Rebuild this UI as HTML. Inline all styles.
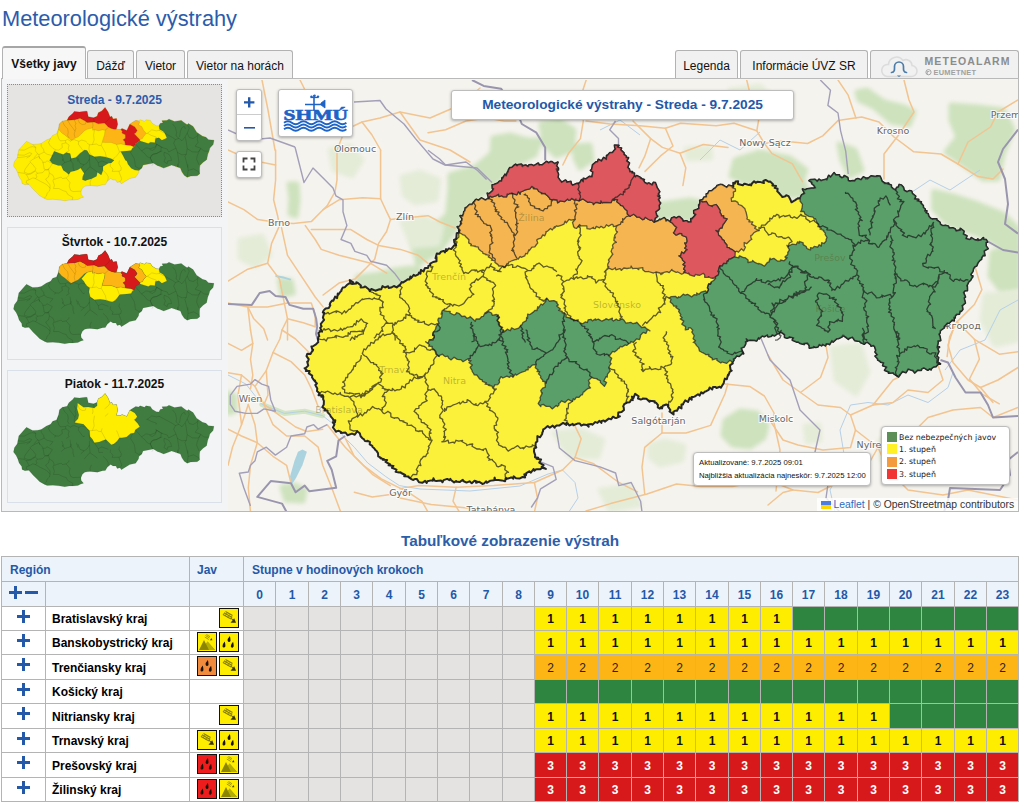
<!DOCTYPE html><html lang="sk"><head><meta charset="utf-8"><title>Meteorologické výstrahy</title><style>
html,body{margin:0;padding:0;background:#fff;}
body{width:1024px;height:807px;position:relative;overflow:hidden;font-family:"Liberation Sans",sans-serif;font-size:12px;color:#000;}
.abs{position:absolute;}
h1{position:absolute;left:2px;top:7px;margin:0;font-size:21.8px;font-weight:normal;color:#2b5cab;line-height:24px;white-space:nowrap;}
.tab{position:absolute;box-sizing:border-box;border:1px solid #b2b2b2;border-bottom:none;border-radius:3px 3px 0 0;background:#f1f1f1;font-size:12px;line-height:30px;text-align:center;white-space:nowrap;color:#111;top:50px;height:28px;}
.tab.act{top:46px;height:33px;background:#f7f7f7;font-weight:bold;line-height:32px;z-index:3;border-top:2px solid #a6a6a6;}
#panel{position:absolute;left:1px;top:78px;width:1018px;height:434px;box-sizing:border-box;border:1px solid #b9b9b9;background:#f3f4f5;}
.thumb{position:absolute;left:7px;width:215px;height:133px;box-sizing:border-box;border:1px solid #d9e0ea;background:#f2f4f6;}
.thumb.sel{border:1px dotted #6f8dc0;background:#e5e4e3;}
.thumb .t{position:absolute;left:0;right:0;top:8px;text-align:center;font-weight:bold;font-size:12px;line-height:14px;color:#111;}
.thumb.sel .t{color:#2b5cab;}
.thumb svg{position:absolute;left:0;top:0;}
#map{position:absolute;left:228px;top:80px;width:790px;height:431px;overflow:hidden;background:#f5f3ee;}
.ctl{position:absolute;background:#fff;box-sizing:border-box;border:1px solid #bdbdbd;border-radius:3px;box-shadow:0 1px 3px rgba(0,0,0,0.3);}
#ttl{left:223px;top:10px;width:343px;height:30px;text-align:center;font-weight:bold;font-size:13.7px;line-height:28px;color:#2458a8;}
.c{position:absolute;font-size:12px;font-weight:bold;text-align:center;white-space:nowrap;overflow:hidden;}
.cell{position:absolute;box-sizing:border-box;border-right:1px solid #b4b4b4;border-bottom:1px solid #b4b4b4;font-size:12px;font-weight:bold;text-align:center;line-height:24px;}
</style></head><body>
<h1>Meteorologické výstrahy</h1>
<div class="tab act" style="left:2px;width:84px">Všetky javy</div>
<div class="tab" style="left:87px;width:47px">Dážď</div>
<div class="tab" style="left:136px;width:49px">Vietor</div>
<div class="tab" style="left:187px;width:106px">Vietor na horách</div>
<div class="tab" style="left:675px;width:63px">Legenda</div>
<div class="tab" style="left:740px;width:128px">Informácie ÚVZ SR</div>
<div class="tab" style="left:870px;width:149px;" id="ma"><svg class="abs" style="left:0;top:0" width="147" height="27" viewBox="870 50 147 27"><path d="M886,75.5h24a5.5,5.5 0 0 0 1,-11a6,6 0 0 0 -9,-5a8,8 0 0 0 -14.500,4a6,6 0 0 0 -1.500,12z" fill="none" stroke="#dcdcdc" stroke-width="1.6"/><path d="M890.500,71.500c3.500,0 3,-3.500 3,-6a4.500,4.500 0 0 1 9,0c0,2.500 -0.500,6 3,6" fill="none" stroke="#4d7ca8" stroke-width="1.7" stroke-linecap="round"/><path d="M895.800,74.500h4.400l-2.200,1.500z" fill="#4d7ca8"/><circle cx="927.500" cy="71.200" r="2.600" fill="none" stroke="#999" stroke-width="0.9"/><path d="M926.300,72.800v-2.300h2" fill="none" stroke="#999" stroke-width="0.8"/><text x="923.500" y="64.200" font-family="Liberation Sans, sans-serif" font-weight="bold" font-size="10.500" fill="#8c8c8c" textLength="85" lengthAdjust="spacing">METEOALARM</text><text x="932.500" y="74" font-family="Liberation Sans, sans-serif" font-weight="bold" font-size="7.400" fill="#a0a0a0" textLength="42.500" lengthAdjust="spacing">EUMETNET</text></svg></div>
<div id="panel"></div>
<div class="thumb sel" style="top:84px"><svg width="213" height="131" viewBox="0 0 213 131"><g transform="matrix(0.29440,0.01619,0,0.2825,-84.586,-28.500)" stroke="#000" stroke-opacity="0.18" stroke-width="1.6" stroke-linejoin="round"><path d="M319,340 324,312 338,295 350,280 371,290 388,288 400,285 418,272 432,265 439,254 452,248 459,230 462,212 472,202 488,198 494,185 508,172 512,165 530,166 550,162 556,162 560,181 578,184 590,178 594,165 606,158 617,145 627,160 634,178 640,175 644,184 656,182 660,202 655,220 671,220 674,216 691,222 701,200 706,196 721,185 731,186 736,182 751,186 756,181 771,182 777,192 791,200 800,200 804,191 814,188 810,181 827,179 834,174 853,181 876,176 888,185 896,190 900,186 916,195 928,215 948,228 960,231 968,239 987,240 984,255 973,268 970,280 966,290 962,310 950,320 939,332 938,342 938,362 930,369 908,371 896,376 886,370 878,358 873,345 863,342 843,336 830,342 816,348 800,342 796,341 781,332 768,336 746,341 742,352 732,362 731,370 721,386 701,392 686,402 672,412 668,405 658,408 654,400 644,400 636,395 625,405 618,418 608,419 591,425 566,424 556,426 548,428 540,435 535,448 536,458 544,467 535,470 525,476 508,479 495,480 480,483 460,481 440,480 420,482 410,478 395,470 385,460 372,448 358,432 345,434 335,430 334,420 325,408 321,395 315,382 306,370 309,355Z" fill="#ffed00"/><path d="M488,198 515,194 532,188 548,196 556,202 580,199 594,204 615,200 628,214 638,218 648,220 655,220 671,220 676,228 674,232 686,238 686,250 678,256 684,262 686,274 671,271 656,274 638,268 621,269 607,269 610,258 615,242 617,226 608,225 594,229 581,226 575,228 574,220 556,226 546,232 538,242 525,255 515,260 502,268 492,260 480,250 470,244 459,231 462,212 472,202Z" fill="#fdb515"/><path d="M701,200 706,196 721,185 731,186 735,190 731,200 742,206 748,218 757,229 748,240 744,248 735,252 728,245 716,232 722,228 726,220 718,208 706,202Z" fill="#fdb515"/><path d="M488,198 494,185 508,172 512,165 530,166 550,162 556,162 560,181 578,184 590,178 594,165 606,158 617,145 627,160 634,178 640,175 644,184 656,182 660,202 655,220 648,220 638,218 628,214 615,200 594,204 580,199 556,202 548,196 532,188 515,194Z" fill="#d7191c"/><path d="M671,220 674,216 691,222 701,200 706,202 718,208 726,220 722,228 716,232 728,245 735,252 735,256 720,268 716,279 704,275 686,274 684,262 678,256 686,250 686,238 674,232 676,228Z" fill="#d7191c"/><path d="M800,200 804,191 814,188 810,181 827,179 834,174 853,181 876,176 888,185 896,190 900,186 916,195 928,215 948,228 960,231 968,239 987,240 984,255 973,268 970,280 966,290 962,310 950,320 939,332 938,342 938,362 930,369 908,371 896,376 886,370 878,358 873,345 863,342 843,336 830,342 816,348 800,342 796,341 781,332 768,336 746,341 742,352 732,362 718,361 706,355 695,342 691,330 686,328 678,312 670,298 691,295 706,292 711,282 716,279 720,268 735,256 742,258 756,262 764,264 771,259 781,260 786,260 788,245 800,242 810,250 827,241 820,225 814,218 802,212Z" fill="#407c3f"/><path d="M430,342 444,310 460,315 475,320 485,312 498,315 502,332 518,328 532,312 548,300 556,301 564,315 581,322 600,319 618,320 638,325 648,330 638,340 628,342 610,354 610,368 604,385 591,376 588,390 571,400 556,405 550,408 540,405 541,395 546,382 541,375 534,364 525,371 512,376 500,379 494,389 485,382 475,375 468,359 458,360 438,354 428,342Z" fill="#407c3f"/><path d="M472,202 480,218 490,228 492,240 490,252 495,260 M490,198 498,212 508,225 515,235 512,245 515,258 M512,194 518,208 515,215 518,225 515,235 M525,192 530,205 540,210 550,208 552,200 M459,231 455,250 460,265 465,272 482,270 490,265 500,272 502,268 M432,265 425,280 430,290 440,300 450,305 444,310 M482,270 484,278 470,282 472,295 460,305 450,305 M484,278 495,285 492,298 495,305 485,312 M502,268 512,265 528,270 526,280 535,292 542,302 548,300 M528,270 538,265 550,268 556,272 M400,285 400,295 408,305 410,315 420,322 440,326 430,340 M371,290 382,300 380,312 388,322 392,325 410,315 M324,312 342,312 362,300 371,298 382,300 M319,330 342,330 360,320 368,322 362,332 350,340 M392,325 395,340 M388,322 375,338 M470,322 475,335 472,342 M498,315 500,330 502,342 M520,325 525,342 M615,200 628,188 634,178 M580,199 578,184 M575,200 576,212 574,220 M617,226 628,215 M581,226 578,245 580,262 574,279 M607,269 604,280 596,281 588,276 574,279 564,280 556,275 M564,280 562,295 566,312 578,322 M604,280 610,290 618,305 621,320 M656,274 661,285 666,300 658,312 651,320 644,325 M666,300 670,298 M720,268 731,280 741,292 756,280 771,282 788,275 791,265 806,272 812,275 M741,292 751,300 761,312 771,315 774,305 791,298 804,290 812,288 M711,282 706,292 704,300 716,320 718,330 M771,315 776,325 781,335 776,342 M757,229 761,228 776,215 791,218 802,215 M761,228 774,235 791,240 790,245 M846,190 856,202 860,220 858,232 868,240 856,245 850,258 858,275 863,290 866,310 868,325 863,342 M868,240 878,248 888,235 896,220 903,202 896,190 M878,202 873,215 870,235 M878,202 886,196 890,205 M896,220 903,235 916,238 928,230 933,222 M890,235 893,252 896,275 893,295 888,302 893,320 898,342 M896,275 913,285 933,285 940,275 943,270 M933,222 930,240 933,250 923,265 940,270 953,280 968,280 M940,275 930,298 928,310 936,330 M863,290 878,298 893,295 M800,215 830,230 846,238 856,245 M788,262 800,270 808,275 828,280 833,290 850,280 858,275 M808,275 806,290 793,298 780,300 770,315 778,332 M818,292 833,298 840,308 843,320 830,322 828,332 817,325 822,312 817,302 818,292 M768,285 778,288 788,280 793,265 M319,340 342,336 362,330 M362,352 368,345 385,335 392,332 M392,332 405,348 408,360 410,375 422,378 425,372 M405,352 415,350 420,345 438,354 M362,352 372,362 382,375 380,382 365,392 358,395 342,390 346,378 362,355 M321,392 342,394 350,398 359,416 351,419 349,428 358,432 M350,398 365,395 380,384 388,391 382,396 386,405 380,410 372,408 359,416 M380,410 395,418 410,425 422,432 430,442 428,452 420,460 418,470 410,478 M388,391 405,388 412,379 425,375 428,388 425,402 415,410 422,420 430,430 430,442 M438,354 430,368 425,375 M428,388 440,395 444,405 440,415 445,430 442,442 460,441 475,448 485,450 490,460 508,470 505,479 M444,410 455,405 468,400 472,405 485,402 495,392 494,389 M485,402 498,418 495,430 500,445 508,449 535,446 M472,335 480,348 468,359 M480,348 500,340 502,330 M500,340 508,350 508,362 512,376 M525,330 532,348 546,352 534,364 M546,352 556,345 564,330 M564,315 564,330 566,358 556,368 546,382 M566,358 581,368 591,376 M594,342 596,355 610,354 M581,322 594,342 606,335 628,342 M610,368 621,378 628,390 626,405 M636,342 634,352 644,362 641,370 664,368 671,365 672,355 664,340 666,330 M664,368 668,380 674,395 668,405 M571,400 566,412 567,424 M718,330 720,348 731,354 742,352 M863,330 866,342 M898,330 899,352 918,345 936,355 938,362 M899,352 896,376" fill="none" stroke-opacity="0.25"/></g></svg><div class="t" style="top:8px">Streda - 9.7.2025</div></div>
<div class="thumb" style="top:227px"><svg width="213" height="131" viewBox="0 0 213 131"><g transform="matrix(0.29440,0.01619,0,0.2825,-84.586,-28.500)" stroke="#000" stroke-opacity="0.18" stroke-width="1.6" stroke-linejoin="round"><path d="M319,340 324,312 338,295 350,280 371,290 388,288 400,285 418,272 432,265 439,254 452,248 459,230 462,212 472,202 488,198 494,185 508,172 512,165 530,166 550,162 556,162 560,181 578,184 590,178 594,165 606,158 617,145 627,160 634,178 640,175 644,184 656,182 660,202 655,220 671,220 674,216 691,222 701,200 706,196 721,185 731,186 736,182 751,186 756,181 771,182 777,192 791,200 800,200 804,191 814,188 810,181 827,179 834,174 853,181 876,176 888,185 896,190 900,186 916,195 928,215 948,228 960,231 968,239 987,240 984,255 973,268 970,280 966,290 962,310 950,320 939,332 938,342 938,362 930,369 908,371 896,376 886,370 878,358 873,345 863,342 843,336 830,342 816,348 800,342 796,341 781,332 768,336 746,341 742,352 732,362 731,370 721,386 701,392 686,402 672,412 668,405 658,408 654,400 644,400 636,395 625,405 618,418 608,419 591,425 566,424 556,426 548,428 540,435 535,448 536,458 544,467 535,470 525,476 508,479 495,480 480,483 460,481 440,480 420,482 410,478 395,470 385,460 372,448 358,432 345,434 335,430 334,420 325,408 321,395 315,382 306,370 309,355Z" fill="#407c3f"/><path d="M731,186 736,182 751,186 756,181 771,182 777,192 791,200 800,200 802,212 814,218 820,225 827,241 810,250 800,242 788,245 786,260 781,260 771,259 764,264 756,262 742,258 735,256 735,252 744,248 748,240 757,229 748,218 742,206 731,200 735,190Z" fill="#ffed00"/><path d="M537,250 556,226 574,220 575,228 581,226 594,229 608,225 617,226 615,242 610,258 607,269 621,269 638,268 656,274 671,271 686,274 704,275 716,279 711,282 706,292 691,295 670,298 666,300 658,312 651,320 644,325 638,325 618,320 600,319 581,322 566,312 562,295 564,280 556,275 550,268 545,258Z" fill="#ffed00"/><path d="M488,198 515,194 532,188 548,196 556,202 580,199 594,204 615,200 628,214 638,218 648,220 655,220 671,220 676,228 674,232 686,238 686,250 678,256 684,262 686,274 671,271 656,274 638,268 621,269 607,269 610,258 615,242 617,226 608,225 594,229 581,226 575,228 574,220 556,226 546,232 538,242 525,255 515,260 502,268 492,260 480,250 470,244 459,231 462,212 472,202Z" fill="#fdb515"/><path d="M701,200 706,196 721,185 731,186 735,190 731,200 742,206 748,218 757,229 748,240 744,248 735,252 728,245 716,232 722,228 726,220 718,208 706,202Z" fill="#fdb515"/><path d="M488,198 494,185 508,172 512,165 530,166 550,162 556,162 560,181 578,184 590,178 594,165 606,158 617,145 627,160 634,178 640,175 644,184 656,182 660,202 655,220 648,220 638,218 628,214 615,200 594,204 580,199 556,202 548,196 532,188 515,194Z" fill="#d7191c"/><path d="M671,220 674,216 691,222 701,200 706,202 718,208 726,220 722,228 716,232 728,245 735,252 735,256 720,268 716,279 704,275 686,274 684,262 678,256 686,250 686,238 674,232 676,228Z" fill="#d7191c"/><path d="M472,202 480,218 490,228 492,240 490,252 495,260 M490,198 498,212 508,225 515,235 512,245 515,258 M512,194 518,208 515,215 518,225 515,235 M525,192 530,205 540,210 550,208 552,200 M459,231 455,250 460,265 465,272 482,270 490,265 500,272 502,268 M432,265 425,280 430,290 440,300 450,305 444,310 M482,270 484,278 470,282 472,295 460,305 450,305 M484,278 495,285 492,298 495,305 485,312 M502,268 512,265 528,270 526,280 535,292 542,302 548,300 M528,270 538,265 550,268 556,272 M400,285 400,295 408,305 410,315 420,322 440,326 430,340 M371,290 382,300 380,312 388,322 392,325 410,315 M324,312 342,312 362,300 371,298 382,300 M319,330 342,330 360,320 368,322 362,332 350,340 M392,325 395,340 M388,322 375,338 M470,322 475,335 472,342 M498,315 500,330 502,342 M520,325 525,342 M615,200 628,188 634,178 M580,199 578,184 M575,200 576,212 574,220 M617,226 628,215 M581,226 578,245 580,262 574,279 M607,269 604,280 596,281 588,276 574,279 564,280 556,275 M564,280 562,295 566,312 578,322 M604,280 610,290 618,305 621,320 M656,274 661,285 666,300 658,312 651,320 644,325 M666,300 670,298 M720,268 731,280 741,292 756,280 771,282 788,275 791,265 806,272 812,275 M741,292 751,300 761,312 771,315 774,305 791,298 804,290 812,288 M711,282 706,292 704,300 716,320 718,330 M771,315 776,325 781,335 776,342 M757,229 761,228 776,215 791,218 802,215 M761,228 774,235 791,240 790,245 M846,190 856,202 860,220 858,232 868,240 856,245 850,258 858,275 863,290 866,310 868,325 863,342 M868,240 878,248 888,235 896,220 903,202 896,190 M878,202 873,215 870,235 M878,202 886,196 890,205 M896,220 903,235 916,238 928,230 933,222 M890,235 893,252 896,275 893,295 888,302 893,320 898,342 M896,275 913,285 933,285 940,275 943,270 M933,222 930,240 933,250 923,265 940,270 953,280 968,280 M940,275 930,298 928,310 936,330 M863,290 878,298 893,295 M800,215 830,230 846,238 856,245 M788,262 800,270 808,275 828,280 833,290 850,280 858,275 M808,275 806,290 793,298 780,300 770,315 778,332 M818,292 833,298 840,308 843,320 830,322 828,332 817,325 822,312 817,302 818,292 M768,285 778,288 788,280 793,265 M319,340 342,336 362,330 M362,352 368,345 385,335 392,332 M392,332 405,348 408,360 410,375 422,378 425,372 M405,352 415,350 420,345 438,354 M362,352 372,362 382,375 380,382 365,392 358,395 342,390 346,378 362,355 M321,392 342,394 350,398 359,416 351,419 349,428 358,432 M350,398 365,395 380,384 388,391 382,396 386,405 380,410 372,408 359,416 M380,410 395,418 410,425 422,432 430,442 428,452 420,460 418,470 410,478 M388,391 405,388 412,379 425,375 428,388 425,402 415,410 422,420 430,430 430,442 M438,354 430,368 425,375 M428,388 440,395 444,405 440,415 445,430 442,442 460,441 475,448 485,450 490,460 508,470 505,479 M444,410 455,405 468,400 472,405 485,402 495,392 494,389 M485,402 498,418 495,430 500,445 508,449 535,446 M472,335 480,348 468,359 M480,348 500,340 502,330 M500,340 508,350 508,362 512,376 M525,330 532,348 546,352 534,364 M546,352 556,345 564,330 M564,315 564,330 566,358 556,368 546,382 M566,358 581,368 591,376 M594,342 596,355 610,354 M581,322 594,342 606,335 628,342 M610,368 621,378 628,390 626,405 M636,342 634,352 644,362 641,370 664,368 671,365 672,355 664,340 666,330 M664,368 668,380 674,395 668,405 M571,400 566,412 567,424 M718,330 720,348 731,354 742,352 M863,330 866,342 M898,330 899,352 918,345 936,355 938,362 M899,352 896,376" fill="none" stroke-opacity="0.25"/></g></svg><div class="t" style="top:6.5px">Štvrtok - 10.7.2025</div></div>
<div class="thumb" style="top:370px"><svg width="213" height="131" viewBox="0 0 213 131"><g transform="matrix(0.29440,0.01619,0,0.2825,-84.586,-28.500)" stroke="#000" stroke-opacity="0.18" stroke-width="1.6" stroke-linejoin="round"><path d="M319,340 324,312 338,295 350,280 371,290 388,288 400,285 418,272 432,265 439,254 452,248 459,230 462,212 472,202 488,198 494,185 508,172 512,165 530,166 550,162 556,162 560,181 578,184 590,178 594,165 606,158 617,145 627,160 634,178 640,175 644,184 656,182 660,202 655,220 671,220 674,216 691,222 701,200 706,196 721,185 731,186 736,182 751,186 756,181 771,182 777,192 791,200 800,200 804,191 814,188 810,181 827,179 834,174 853,181 876,176 888,185 896,190 900,186 916,195 928,215 948,228 960,231 968,239 987,240 984,255 973,268 970,280 966,290 962,310 950,320 939,332 938,342 938,362 930,369 908,371 896,376 886,370 878,358 873,345 863,342 843,336 830,342 816,348 800,342 796,341 781,332 768,336 746,341 742,352 732,362 731,370 721,386 701,392 686,402 672,412 668,405 658,408 654,400 644,400 636,395 625,405 618,418 608,419 591,425 566,424 556,426 548,428 540,435 535,448 536,458 544,467 535,470 525,476 508,479 495,480 480,483 460,481 440,480 420,482 410,478 395,470 385,460 372,448 358,432 345,434 335,430 334,420 325,408 321,395 315,382 306,370 309,355Z" fill="#407c3f"/><path d="M524,184 544,198 560,196 580,199 590,190 590,178 594,165 606,158 617,145 627,160 634,178 640,175 644,184 656,182 660,202 655,220 671,220 674,216 691,222 701,200 706,202 718,208 726,220 722,228 716,232 728,245 735,256 720,268 716,279 704,282 690,295 677,298 666,300 658,312 647,322 638,325 620,308 610,312 597,318 581,322 574,310 566,300 564,280 556,272 544,258 513,254 525,240 528,226 522,205Z" fill="#ffed00"/><path d="M472,202 480,218 490,228 492,240 490,252 495,260 M490,198 498,212 508,225 515,235 512,245 515,258 M512,194 518,208 515,215 518,225 515,235 M525,192 530,205 540,210 550,208 552,200 M459,231 455,250 460,265 465,272 482,270 490,265 500,272 502,268 M432,265 425,280 430,290 440,300 450,305 444,310 M482,270 484,278 470,282 472,295 460,305 450,305 M484,278 495,285 492,298 495,305 485,312 M502,268 512,265 528,270 526,280 535,292 542,302 548,300 M528,270 538,265 550,268 556,272 M400,285 400,295 408,305 410,315 420,322 440,326 430,340 M371,290 382,300 380,312 388,322 392,325 410,315 M324,312 342,312 362,300 371,298 382,300 M319,330 342,330 360,320 368,322 362,332 350,340 M392,325 395,340 M388,322 375,338 M470,322 475,335 472,342 M498,315 500,330 502,342 M520,325 525,342 M615,200 628,188 634,178 M580,199 578,184 M575,200 576,212 574,220 M617,226 628,215 M581,226 578,245 580,262 574,279 M607,269 604,280 596,281 588,276 574,279 564,280 556,275 M564,280 562,295 566,312 578,322 M604,280 610,290 618,305 621,320 M656,274 661,285 666,300 658,312 651,320 644,325 M666,300 670,298 M720,268 731,280 741,292 756,280 771,282 788,275 791,265 806,272 812,275 M741,292 751,300 761,312 771,315 774,305 791,298 804,290 812,288 M711,282 706,292 704,300 716,320 718,330 M771,315 776,325 781,335 776,342 M757,229 761,228 776,215 791,218 802,215 M761,228 774,235 791,240 790,245 M846,190 856,202 860,220 858,232 868,240 856,245 850,258 858,275 863,290 866,310 868,325 863,342 M868,240 878,248 888,235 896,220 903,202 896,190 M878,202 873,215 870,235 M878,202 886,196 890,205 M896,220 903,235 916,238 928,230 933,222 M890,235 893,252 896,275 893,295 888,302 893,320 898,342 M896,275 913,285 933,285 940,275 943,270 M933,222 930,240 933,250 923,265 940,270 953,280 968,280 M940,275 930,298 928,310 936,330 M863,290 878,298 893,295 M800,215 830,230 846,238 856,245 M788,262 800,270 808,275 828,280 833,290 850,280 858,275 M808,275 806,290 793,298 780,300 770,315 778,332 M818,292 833,298 840,308 843,320 830,322 828,332 817,325 822,312 817,302 818,292 M768,285 778,288 788,280 793,265 M319,340 342,336 362,330 M362,352 368,345 385,335 392,332 M392,332 405,348 408,360 410,375 422,378 425,372 M405,352 415,350 420,345 438,354 M362,352 372,362 382,375 380,382 365,392 358,395 342,390 346,378 362,355 M321,392 342,394 350,398 359,416 351,419 349,428 358,432 M350,398 365,395 380,384 388,391 382,396 386,405 380,410 372,408 359,416 M380,410 395,418 410,425 422,432 430,442 428,452 420,460 418,470 410,478 M388,391 405,388 412,379 425,375 428,388 425,402 415,410 422,420 430,430 430,442 M438,354 430,368 425,375 M428,388 440,395 444,405 440,415 445,430 442,442 460,441 475,448 485,450 490,460 508,470 505,479 M444,410 455,405 468,400 472,405 485,402 495,392 494,389 M485,402 498,418 495,430 500,445 508,449 535,446 M472,335 480,348 468,359 M480,348 500,340 502,330 M500,340 508,350 508,362 512,376 M525,330 532,348 546,352 534,364 M546,352 556,345 564,330 M564,315 564,330 566,358 556,368 546,382 M566,358 581,368 591,376 M594,342 596,355 610,354 M581,322 594,342 606,335 628,342 M610,368 621,378 628,390 626,405 M636,342 634,352 644,362 641,370 664,368 671,365 672,355 664,340 666,330 M664,368 668,380 674,395 668,405 M571,400 566,412 567,424 M718,330 720,348 731,354 742,352 M863,330 866,342 M898,330 899,352 918,345 936,355 938,362 M899,352 896,376" fill="none" stroke-opacity="0.25"/></g></svg><div class="t" style="top:5.5px">Piatok - 11.7.2025</div></div>
<div id="map">
<svg class="abs" style="left:0;top:0" width="790" height="431" viewBox="228 80 790 431">
<defs><filter id="bl" x="-20%" y="-20%" width="140%" height="140%"><feGaussianBlur stdDeviation="2.2"/></filter></defs>
<g filter="url(#bl)" fill="#cde2bd" stroke="#cde2bd" stroke-width="5" stroke-linejoin="round"><path d="M450.0,175.0 L475.0,167.5 L490.0,155.0 L500.0,145.0 L525.0,140.0 L540.0,140.0 L535.0,155.0 L512.5,165.0 L500.0,177.5 L490.0,190.0 L475.0,200.0 L462.5,210.0 L455.0,230.0 L440.0,250.0 L417.5,265.0 L415.0,245.0 L430.0,230.0 L447.5,215.0 L450.0,190.0Z"/><path d="M357.5,280.0 L375.0,275.0 L395.0,270.0 L410.0,268.0 L420.0,270.0 L400.0,287.0 L387.5,289.0 L371.0,292.0Z"/><path d="M493.0,138.0 L510.0,135.0 L527.0,140.0 L526.0,160.0 L505.0,165.0 L492.0,155.0Z"/><path d="M289.0,184.0 L297.0,184.0 L298.0,200.0 L296.0,216.0 L290.0,214.0 L291.0,198.0Z"/><path d="M279.5,280.0 L291.0,281.0 L293.4,293.0 L282.0,295.0Z"/><path d="M414.0,230.0 L428.0,228.0 L440.0,236.0 L436.0,250.0 L424.0,260.0 L414.0,252.0Z"/><path d="M357.0,277.0 L372.0,275.0 L386.0,279.0 L384.0,287.0 L366.0,288.0Z"/><path d="M857.0,92.0 L867.0,90.0 L884.0,102.0 L904.0,107.0 L914.0,112.0 L909.0,125.0 L891.5,122.0 L874.0,107.0 L859.0,100.0Z"/><path d="M951.0,105.0 L978.0,107.0 L1003.0,110.0 L1013.0,129.5 L1003.0,154.0 L998.0,179.0 L983.0,179.0 L963.0,164.0 L946.0,152.0 L958.0,137.0 L951.0,120.0Z"/><path d="M933.6,191.5 L953.0,196.0 L978.0,204.0 L1003.0,214.0 L1018.0,228.6 L1018.0,253.0 L1003.0,248.0 L988.0,238.5 L968.0,231.0 L948.0,223.7 L933.6,209.0Z"/><path d="M780.0,164.0 L795.0,171.6 L805.0,184.0 L807.0,194.0 L795.0,196.0 L780.0,194.0 L768.0,180.0Z"/><path d="M839.0,144.0 L855.0,150.0 L862.0,170.0 L850.0,176.0 L842.0,160.0Z"/><path d="M541.0,124.0 L560.0,121.0 L574.0,130.0 L572.0,150.0 L556.0,156.0 L545.0,145.0Z"/><path d="M576.0,146.0 L590.0,145.0 L592.0,160.0 L580.0,168.0 L575.0,158.0Z"/><path d="M735.0,160.0 L760.0,152.0 L790.0,158.0 L806.0,170.0 L800.0,185.0 L770.0,180.0 L745.0,182.0 L731.0,176.0Z"/><path d="M655.0,205.0 L690.0,200.0 L700.0,202.0 L692.0,220.0 L672.0,216.0 L656.0,219.0Z"/><path d="M725.0,420.6 L740.0,411.0 L757.0,413.0 L767.0,425.5 L764.0,437.6 L750.0,447.0 L732.6,445.0 L723.0,435.0Z"/><path d="M228.0,393.0 L235.0,396.0 L235.0,411.0 L228.0,413.0Z"/><path d="M282.0,487.0 L295.0,485.0 L305.0,490.0 L303.0,501.0 L286.0,500.0Z"/><path d="M992.0,252.0 L1018.0,248.0 L1018.0,288.0 L1002.0,292.0 L990.0,276.0Z"/></g>
<g filter="url(#bl)" fill="#e4ecd8" stroke="#e4ecd8" stroke-width="5" stroke-linejoin="round"><path d="M650.0,445.0 L665.0,441.0 L684.0,446.0 L682.0,460.0 L660.0,465.0 L650.0,457.0Z"/><path d="M686.0,149.0 L710.0,148.0 L711.0,158.0 L688.0,159.0Z"/><path d="M985.0,295.0 L1018.0,292.0 L1018.0,340.0 L995.0,345.0 L982.0,320.0Z"/><path d="M832.0,348.0 L860.0,345.0 L868.0,372.0 L856.0,394.0 L836.0,380.0Z"/><path d="M805.0,426.0 L819.0,425.0 L820.0,440.0 L807.0,442.0Z"/><path d="M402.0,177.0 L420.0,172.0 L439.0,180.0 L436.0,200.0 L415.0,203.0 L404.0,195.0Z"/><path d="M402.0,222.0 L425.0,218.0 L442.0,226.0 L438.0,244.0 L412.0,246.0Z"/><path d="M554.0,433.0 L580.0,430.0 L603.0,440.0 L598.0,457.0 L570.0,456.0Z"/><path d="M330.0,150.0 L350.0,146.0 L362.0,160.0 L352.0,176.0 L334.0,170.0Z"/><path d="M240.0,240.0 L262.0,236.0 L270.0,255.0 L255.0,266.0 L240.0,258.0Z"/><path d="M730.0,90.0 L760.0,86.0 L775.0,100.0 L760.0,112.0 L735.0,108.0Z"/><path d="M880.0,440.0 L910.0,436.0 L920.0,455.0 L900.0,470.0 L882.0,460.0Z"/><path d="M600.0,490.0 L630.0,486.0 L640.0,505.0 L610.0,510.0Z"/></g>
<path d="M261.8,404.4L284.4,413.4L304.7,411.2L322.7,415.7" fill="none" stroke="#d3e6c4" stroke-width="5" stroke-linecap="round" stroke-linejoin="round"/>
<path d="M302.4,449.5L306.9,451.8L302.4,465.3L295.6,478.8L291,485.6L290,476.6L294.5,460.8L298,451.8Z" fill="#aad3df"/><path d="M275.6,275l8,1.500l7.800,2.500l-1,1.500l-7,-2l-8,-1.500z" fill="#aad3df"/>
<g fill="none" stroke="#b5d0e8" stroke-width="1" stroke-linejoin="round"><path d="M228.0,375.0 L246.0,384.1 L261.8,404.4 L284.4,413.4 L304.7,411.2 L322.7,415.7 L334.0,424.7 L345.2,438.2 L354.3,447.2 L367.8,463.0 L385.8,476.6 L399.4,485.6 L420.0,489.0 L470.0,491.0 L520.0,486.0 L548.0,474.0 L562.5,470.0 L575.0,482.5 L578.0,498.0 L568.8,512.0"/><path d="M700.0,160.0 L720.0,140.0 L740.0,150.0 L760.0,132.0"/><path d="M600.0,130.0 L620.0,120.0 L640.0,135.0"/><path d="M900.0,200.0 L930.0,180.0 L950.0,190.0 L980.0,170.0"/><path d="M1018.0,300.0 L1000.0,310.0 L985.0,340.0 L960.0,350.0 L945.0,370.0"/><path d="M850.5,405.0 L868.0,402.5 L888.0,405.0 L908.0,395.0 L928.0,402.5 L948.0,387.5 L953.0,372.5"/><path d="M850.5,405.0 L840.0,430.0 L845.0,460.0 L830.0,490.0 L835.0,512.0"/></g>
<g fill="none" stroke="#f2c490" stroke-width="1.5" stroke-linejoin="round" stroke-linecap="round"><path d="M838.0,120.6 L861.7,117.0 L879.0,122.0 L894.0,137.0 L913.8,151.8 L941.0,154.0 L958.0,164.0 L978.0,176.6 L993.0,179.0 L1003.0,169.0"/><path d="M904.0,80.0 L909.0,100.0 L914.0,112.0 L899.0,134.5 L884.0,154.0 L884.0,179.0"/><path d="M958.0,164.0 L968.0,142.0 L990.5,127.0 L998.0,112.0 L1018.0,100.0"/><path d="M586.0,511.0 L610.6,503.6 L647.0,494.0 L676.5,484.0 L701.0,486.5 L732.6,486.5 L768.0,480.0"/><path d="M662.0,413.0 L662.0,433.0 L644.7,447.4 L642.0,467.0 L644.7,494.0"/><path d="M662.0,433.0 L686.0,433.0 L710.6,425.4 L725.0,393.7 L727.7,384.0"/><path d="M725.0,384.0 L749.7,386.4 L764.4,396.0 L774.0,413.0 L774.0,423.0 L780.0,450.0 L776.0,491.0"/><path d="M228.0,201.8 L243.9,209.7 L257.7,219.6 L277.6,222.6 L293.4,223.6 L311.3,221.6 L323.1,209.7 L339.0,199.8 L362.8,197.8 L380.6,198.8"/><path d="M380.6,150.0 L380.6,198.8 L386.6,211.7 L390.5,219.6 L386.6,231.5 L378.6,243.4 L374.7,259.3 L366.8,267.2 L354.9,279.1 L339.0,283.1 L323.1,295.0"/><path d="M390.5,219.6 L406.4,217.7 L428.0,215.7 L440.0,222.0 L455.0,228.0"/><path d="M281.5,227.6 L287.5,255.3 L303.3,279.1 L315.2,297.0 L323.1,306.9"/><path d="M275.6,150.0 L275.6,180.0 L273.6,199.8 L277.6,215.7 L279.5,225.6"/><path d="M279.5,225.6 L271.6,243.4 L267.6,263.3 L279.5,279.1 L283.5,298.9 L287.5,318.8 L287.5,340.0"/><path d="M228.0,281.1 L247.8,269.2 L267.6,263.3"/><path d="M305.3,225.6 L315.2,239.5 L321.2,249.4 L339.0,255.3 L354.9,259.3 L370.7,263.3 L386.6,273.2"/><path d="M311.3,229.6 L339.0,229.6 L350.9,229.6 L366.8,239.5 L378.6,245.4 L400.4,249.4 L418.3,255.3 L428.0,263.3"/><path d="M228.0,302.9 L247.8,306.9 L267.6,306.9 L287.5,302.9 L311.3,302.9 L315.2,314.8 L315.2,326.7"/><path d="M247.8,306.9 L253.8,318.8 L263.7,328.7 L267.6,340.0"/><path d="M287.5,318.8 L303.3,322.7 L315.2,326.7"/><path d="M337.0,150.0 L337.0,180.0 L335.0,191.9 L327.1,205.8 L323.1,209.7"/><path d="M262.0,80.0 L268.0,110.0 L275.0,150.0"/><path d="M337.0,150.0 L345.0,130.0 L362.0,122.0 L380.0,118.0 L400.0,112.0 L430.0,118.0 L460.0,105.0 L480.0,88.0"/><path d="M380.6,150.0 L372.0,135.0 L362.0,122.0"/><path d="M400.0,112.0 L420.0,140.0 L450.0,150.0 L470.0,162.0"/><path d="M228.0,150.0 L250.0,160.0 L275.6,165.0"/><path d="M300.0,80.0 L310.0,100.0 L330.0,115.0 L345.0,130.0"/><path d="M228.0,372.8 L241.5,375.0 L255.0,386.4 L264.0,404.4 L279.9,415.7 L295.6,427.0 L306.9,431.5 L322.7,429.2"/><path d="M255.0,386.4 L266.3,370.6 L273.0,352.5 L279.9,339.0 L282.0,330.0 L287.5,318.8"/><path d="M250.5,330.0 L252.8,343.5 L250.5,359.3 L252.8,375.0 L250.5,388.6"/><path d="M248.3,404.4 L241.5,424.7 L232.5,447.2 L228.0,465.3"/><path d="M248.3,404.4 L255.0,424.7 L257.3,442.7 L250.5,465.3 L248.3,487.8 L250.5,512.0"/><path d="M264.0,404.4 L273.0,424.7 L286.6,436.0 L304.7,436.0 L318.2,447.2 L322.7,465.3 L331.7,487.8 L340.7,512.0"/><path d="M228.0,429.2 L241.5,436.0 L257.3,442.7 L273.0,456.3 L286.6,465.3 L291.0,483.3"/><path d="M327.2,424.7 L345.2,447.2 L363.3,465.3 L381.3,478.8 L399.4,487.8 L408.4,492.3"/><path d="M345.2,438.2 L354.3,456.3 L372.3,474.3 L390.3,485.6"/><path d="M273.0,352.5 L291.0,361.6 L304.7,375.0 L311.4,388.6 L318.2,406.7"/><path d="M408.4,492.3 L422.0,501.4 L428.0,512.0"/><path d="M354.3,492.3 L372.3,496.9 L390.3,494.6 L408.4,492.3"/><path d="M228.0,343.5 L241.5,350.3 L252.8,343.5"/><path d="M282.0,330.0 L295.6,339.0 L309.2,352.5"/><path d="M250.5,330.0 L247.8,306.9"/><path d="M241.5,375.0 L238.0,395.0 L241.5,424.7"/><path d="M266.3,370.6 L268.0,395.0 L264.0,404.4"/><path d="M400.0,488.8 L418.8,485.6 L456.2,487.2 L493.8,485.6 L534.4,482.5 L537.5,498.0 L534.4,512.0"/><path d="M534.4,482.5 L562.5,470.0 L575.0,457.5 L581.2,438.8 L575.0,426.2"/><path d="M575.0,457.5 L593.8,463.8 L618.8,482.5 L637.5,491.9"/><path d="M456.2,487.2 L453.0,501.2 L459.4,512.0"/><path d="M400.0,498.0 L431.2,504.4 L462.5,507.5 L500.0,512.0"/><path d="M428.0,132.7 L445.6,129.8 L466.0,121.0 L486.6,118.0 L504.2,121.0 L515.9,121.0"/><path d="M586.2,80.0 L580.4,97.6 L583.3,121.0 L580.4,138.6 L568.6,153.2 L562.8,165.0"/><path d="M633.0,121.0 L650.7,138.6 L662.4,147.4 L680.0,153.2 L685.8,167.9 L682.9,185.5"/><path d="M650.7,138.6 L644.8,156.2 L639.0,167.9"/><path d="M680.0,153.2 L703.4,144.5 L728.0,147.4"/><path d="M640.0,125.7 L665.4,128.2 L680.6,123.2 L716.2,125.7 L734.0,123.2 L756.8,130.8 L764.4,143.5 L772.0,153.6 L792.4,163.8 L802.5,181.6"/><path d="M764.4,143.5 L782.2,140.9 L807.6,143.5 L822.8,135.9 L838.0,120.6"/><path d="M665.4,128.2 L673.0,146.0 L660.3,156.2 L645.0,171.4"/><path d="M756.8,130.8 L759.4,115.5 L751.7,100.3 L746.7,80.0"/><path d="M838.0,80.0 L848.2,95.2 L855.9,118.1"/><path d="M586.0,121.0 L610.0,124.0 L640.0,125.7"/><path d="M768.0,355.0 L783.0,380.0 L800.5,392.5 L820.5,377.5 L828.0,357.5 L825.5,342.5"/><path d="M800.5,392.5 L818.0,405.0 L840.5,407.5 L850.5,415.0 L855.5,430.0 L850.5,447.5 L823.0,450.0 L798.0,445.0 L783.0,440.0 L768.0,417.5"/><path d="M850.5,415.0 L873.0,405.0 L893.0,380.0 L898.0,377.5"/><path d="M873.0,405.0 L893.0,402.5 L908.0,390.0 L928.0,392.5 L943.0,380.0 L938.0,365.0"/><path d="M855.5,430.0 L878.0,447.5 L908.0,437.5 L928.0,417.5 L953.0,410.0 L980.5,407.5 L993.0,417.5 L1018.0,407.5"/><path d="M953.0,330.0 L948.0,345.0 L953.0,362.5 L968.0,380.0 L980.5,387.5 L993.0,402.5"/><path d="M878.0,447.5 L888.0,470.0 L908.0,490.0 L943.0,495.0 L968.0,490.0 L1018.0,500.0"/><path d="M768.0,480.0 L793.0,490.0 L818.0,492.5 L843.0,480.0 L868.0,465.0 L878.0,447.5"/><path d="M768.0,505.0 L783.0,492.5 L793.0,490.0"/><path d="M980.5,387.5 L998.0,380.0 L1018.0,367.5"/><path d="M974.4,264.8 L981.9,289.6 L974.4,304.5 L957.0,321.9 L949.6,336.8 L947.1,356.6"/><path d="M957.0,321.9 L974.4,339.3 L999.3,354.2 L1018.0,351.7"/><path d="M974.4,339.3 L979.4,359.1 L969.5,379.0 L981.9,393.8 L999.3,403.8"/></g>
<g fill="none" stroke="#a49fb9" stroke-width="1.4" stroke-linejoin="round"><path d="M354.0,102.0 L380.0,100.5 L386.0,109.0 L404.0,124.0 L415.5,138.6 L433.0,159.0 L445.0,165.0 L477.0,168.0 L492.0,182.5"/><path d="M295.0,147.0 L304.0,182.5 L313.0,168.0 L325.1,180.0 L333.0,188.0 L336.0,195.9 L343.0,199.8 L343.0,211.7 L346.9,225.6 L341.0,239.5 L350.9,243.4 L354.9,251.4 L366.8,255.3 L370.7,261.3 L386.6,265.2 L394.5,273.2 L400.4,281.1"/><path d="M228.0,130.0 L250.0,140.0 L270.0,138.0 L295.0,147.0"/><path d="M820.3,80.0 L830.5,90.2 L827.9,105.4 L838.0,113.0 L840.6,130.8 L845.7,151.1 L848.2,174.0"/><path d="M556.2,429.4 L559.4,448.0 L575.0,460.6 L600.0,466.9 L615.6,473.0 L618.8,485.6 L631.2,482.5 L640.6,501.2 L642.0,512.0"/><path d="M537.5,460.6 L553.0,466.9 L556.2,479.4 L540.6,488.8 L537.5,498.0 L531.2,507.5"/><path d="M230.3,395.4 L237.0,386.4 L250.5,384.1 L255.0,379.6 L261.8,384.1 L268.6,386.4 L270.8,399.9 L275.4,411.2 L264.0,408.9 L257.3,413.4 L246.0,413.4 L234.8,411.2 L230.3,404.4 L230.3,395.4"/><path d="M327.2,424.7 L318.2,429.2 L313.7,424.7 L306.9,427.0 L304.7,433.7 L291.0,436.0 L286.6,447.2 L275.4,455.1 L266.3,447.2 L257.3,451.8 L255.0,460.8 L250.5,465.3 L248.3,472.0 L239.3,473.2 L243.8,487.8 L250.5,505.9"/><path d="M615.5,121.0 L609.7,129.8 L618.5,138.6 L618.5,146.0"/><path d="M428.0,150.3 L439.7,159.0 L445.6,165.0 L466.0,162.0 L477.8,170.8 L486.6,179.6"/><path d="M760.0,336.0 L770.0,360.0 L790.0,380.0 L800.0,410.0 L820.0,430.0 L815.0,452.0 L830.0,470.0 L826.0,498.0 L840.0,512.0"/></g>
<g fill="none" stroke="#9a95ae" stroke-width="2" stroke-linejoin="round"><path d="M228.0,303.9 L251.8,304.9 L259.7,293.0 L269.6,291.0 L275.6,296.0 L285.5,297.0 L289.4,304.9 L303.3,308.8 L313.2,308.8 L316.2,318.8 L317.2,326.7 L316.0,334.0 L318.0,340.0"/><path d="M345.2,436.0 L338.5,440.5 L336.2,456.3 L327.2,460.8 L331.7,469.8 L336.2,487.8 L309.2,491.2 L304.7,485.6 L295.6,492.3 L291.0,483.3 L270.8,481.1 L257.3,496.9 L282.0,503.6 L286.6,512.0"/><path d="M1018.0,129.5 L1003.0,149.0 L998.0,162.0 L1005.0,179.0 L1008.0,204.0 L1005.0,224.0 L1018.0,233.6"/><path d="M987.0,241.0 L1003.0,250.0 L1018.0,252.5"/><path d="M940.5,360.0 L948.0,362.5 L955.5,377.5 L965.5,392.5 L980.5,392.5 L988.0,405.0 L993.0,417.5 L1018.0,416.0"/><path d="M1018.0,452.0 L1008.0,460.0 L1010.0,475.0 L1000.0,490.0 L950.0,488.0 L948.0,500.0 L944.0,512.0"/><path d="M472.0,80.0 L483.7,85.9 L501.2,88.8 L515.9,109.3 L521.8,124.0 L536.4,132.7 L545.2,147.4 L545.2,160.6"/></g>
<g font-family="DejaVu Sans, Liberation Sans, sans-serif" font-size="9.5" fill="#666" text-anchor="middle" stroke="#fff" stroke-opacity="0.8" stroke-width="2" paint-order="stroke"><text x="355" y="152.3">Olomouc</text><text x="279" y="226.3">Brno</text><text x="405" y="220.3">Zlín</text><text x="250.5" y="402.3">Wien</text><text x="400.5" y="496.3">Győr</text><text x="658.5" y="424.3">Salgótarján</text><text x="776" y="422.3">Miskolc</text><text x="765" y="146.3">Nowy Sącz</text><text x="893" y="133.8">Krosno</text><text x="1005.5" y="117.8">Przem</text><text x="959" y="329.3">Ужгород</text><text x="869" y="448.3">Nyíre</text><text x="491" y="513.3">Tatabánya</text></g>
<g stroke="#262626" stroke-width="2" stroke-linejoin="round"><path d="M317.9,338.6 318.5,336.8 319.3,336.2 318.4,333.1 321.2,330.7 322.0,331.7 320.2,327.9 321.6,326.4 321.1,325.6 320.8,323.8 324.1,319.9 323.7,319.4 322.9,317.5 324.3,312.9 322.8,312.5 323.7,310.4 325.6,308.5 328.8,307.9 330.3,305.2 329.7,304.6 330.3,302.7 332.2,300.5 333.4,300.7 335.1,296.6 337.1,298.1 337.8,293.4 338.3,294.7 340.4,291.7 341.5,290.7 341.4,290.0 342.8,287.4 344.9,287.2 346.6,285.3 348.9,283.4 350.5,283.5 349.7,280.1 353.2,282.3 352.0,283.9 356.3,283.5 356.3,282.3 357.9,282.9 360.9,285.5 360.6,287.5 363.9,287.3 364.8,286.4 366.2,287.2 369.0,289.5 369.7,291.1 371.4,289.0 375.3,290.7 379.5,289.2 379.9,289.4 381.2,289.3 382.5,286.1 385.0,287.5 388.1,286.2 388.7,288.0 391.1,287.6 393.9,286.0 396.7,287.4 399.8,284.9 399.6,285.6 401.7,282.0 402.8,282.6 406.3,280.4 407.8,279.3 409.5,279.6 410.4,276.4 410.9,278.3 413.7,274.8 415.2,275.8 418.3,274.3 419.0,272.5 420.5,273.7 420.9,269.9 423.5,271.5 425.0,267.9 428.0,268.0 428.5,265.8 430.2,265.4 430.2,263.7 433.1,262.0 436.5,261.3 436.5,257.0 435.5,258.2 436.8,253.4 439.4,253.8 441.0,251.7 443.7,250.9 444.9,252.4 446.1,249.1 446.4,251.0 447.3,250.1 448.9,248.4 451.2,249.1 454.2,245.3 456.2,245.3 454.3,242.4 454.0,239.8 456.2,238.8 456.5,236.0 456.7,233.2 459.0,232.6 458.9,228.8 457.3,226.8 460.0,226.7 461.3,222.0 460.6,221.6 462.4,220.5 461.7,217.9 460.2,215.8 462.8,216.0 463.7,213.2 464.0,211.5 465.0,210.8 465.4,207.8 466.0,208.1 469.5,204.6 472.1,204.6 473.8,202.0 475.1,200.9 474.9,200.8 476.2,199.4 478.5,200.4 481.5,198.0 485.3,200.2 487.2,199.1 489.3,197.4 488.7,198.1 487.4,193.3 488.9,194.0 492.4,191.1 493.7,188.7 492.5,188.4 492.3,184.9 493.9,184.7 497.8,183.1 499.6,181.2 501.6,181.2 502.2,177.7 502.4,178.9 505.0,174.4 506.1,176.0 507.8,171.5 508.1,172.1 508.5,170.1 509.8,167.8 512.1,167.4 513.8,165.7 515.7,164.4 517.0,165.9 518.2,164.8 521.4,164.3 522.7,166.7 521.9,166.0 525.7,165.2 528.0,166.7 529.0,165.1 531.3,164.7 533.9,165.8 538.3,163.2 539.1,165.3 539.8,164.9 540.3,164.9 542.2,165.0 546.6,161.6 548.6,162.9 551.0,161.6 551.8,161.8 554.7,163.8 557.9,162.2 556.4,165.8 558.3,168.4 556.1,169.1 558.4,169.7 556.8,170.5 558.4,174.3 557.8,177.2 560.4,181.0 561.0,181.3 561.5,182.5 565.5,180.2 566.2,180.8 566.7,182.4 570.8,181.6 571.1,183.7 572.5,185.4 577.1,183.4 577.6,183.8 579.8,182.9 581.5,179.9 583.3,181.9 583.4,178.5 585.3,179.0 586.0,179.1 589.4,176.5 592.1,176.9 593.0,171.9 590.6,170.5 591.8,169.4 592.8,164.7 592.5,165.1 595.5,162.4 596.0,162.1 597.7,161.8 598.4,159.5 601.5,161.2 603.7,157.6 606.4,159.6 606.7,155.4 606.8,156.4 609.8,152.8 612.6,152.7 614.3,150.4 615.8,148.9 615.0,147.8 614.6,145.3 618.8,145.4 617.1,147.0 621.4,148.1 620.5,149.7 623.9,153.0 623.8,154.4 626.2,156.3 626.1,157.6 628.4,157.7 626.5,160.9 629.3,163.0 627.5,167.4 629.3,169.3 629.8,171.8 632.4,171.7 631.7,172.9 634.3,173.3 634.2,176.1 635.4,177.1 636.6,175.7 639.2,176.8 641.2,178.3 640.3,178.4 644.2,179.7 642.9,179.8 644.8,182.7 647.5,184.1 647.2,183.6 648.8,183.1 652.2,185.1 653.5,182.4 655.3,182.8 655.2,183.1 656.1,184.7 656.9,187.5 659.6,191.7 658.0,194.1 659.5,195.9 657.3,195.8 659.8,197.7 658.2,199.4 660.1,203.0 660.5,202.9 658.9,205.5 659.4,208.6 658.3,209.8 655.6,211.8 656.6,215.5 657.5,216.3 655.0,218.3 654.1,222.4 658.6,220.7 659.8,219.3 660.2,220.0 664.1,217.8 665.6,219.2 665.9,221.1 667.5,220.1 670.3,222.0 671.6,218.2 674.1,217.1 676.3,218.2 678.5,216.8 679.5,216.7 682.4,219.4 683.0,221.4 685.7,220.9 686.9,220.9 688.3,222.2 691.2,222.1 691.0,218.8 691.9,219.0 694.9,215.8 696.0,214.4 694.0,213.4 693.9,210.6 697.1,209.5 699.1,208.4 698.8,205.0 699.3,205.4 700.2,202.0 699.9,200.5 702.8,199.8 704.1,197.2 706.5,196.9 706.4,193.9 707.7,193.9 709.2,191.0 711.6,190.9 714.4,188.5 715.1,188.2 716.9,186.4 717.0,185.8 720.1,184.6 722.0,184.7 726.7,187.5 727.4,186.8 728.6,185.3 733.3,186.7 733.2,182.8 734.8,183.6 735.6,181.4 738.1,181.3 737.8,184.0 742.8,185.3 744.0,183.8 744.8,183.8 749.2,185.1 749.8,184.6 751.3,184.3 751.1,185.4 751.9,183.5 754.1,181.3 755.7,182.8 757.2,181.8 759.8,181.9 763.9,183.1 763.4,181.0 765.6,179.9 768.9,181.8 769.3,181.7 770.1,181.4 773.0,184.2 772.4,185.5 776.1,186.0 774.7,187.9 777.6,188.8 777.3,191.4 779.3,193.3 781.5,195.8 782.4,197.1 785.4,196.3 786.1,195.2 788.6,196.1 790.2,199.2 791.5,202.3 794.3,200.7 796.3,199.2 795.2,200.2 797.9,198.3 800.4,198.4 800.0,198.4 801.7,194.9 804.8,193.3 804.7,193.3 802.6,189.1 805.1,189.9 807.2,188.9 811.5,188.3 813.3,188.3 815.6,187.9 813.9,185.2 811.8,183.4 812.1,182.4 809.2,180.6 810.5,179.8 815.0,179.4 817.2,181.5 819.0,179.3 820.9,180.8 823.0,180.1 826.7,179.2 826.9,180.1 828.7,175.5 830.5,177.3 834.1,172.8 835.3,174.5 835.8,175.0 839.3,174.9 839.6,176.4 841.8,177.9 844.2,176.8 844.2,175.7 847.7,177.7 848.2,180.7 850.0,181.3 852.9,180.8 854.7,181.1 855.9,179.4 857.8,178.7 861.1,179.9 863.3,177.0 866.1,178.4 865.8,179.1 867.2,178.1 867.5,179.1 871.1,176.1 874.2,176.5 877.5,176.6 876.9,176.0 880.0,176.3 880.9,178.4 882.0,181.4 885.0,183.4 884.3,183.7 888.6,183.3 887.2,183.8 891.2,185.2 891.2,187.1 893.0,188.8 895.2,189.8 895.6,190.3 896.8,187.5 898.4,187.2 899.3,184.6 901.3,185.1 903.4,187.5 904.1,190.4 906.9,191.9 907.5,191.6 909.7,190.7 911.6,191.2 912.2,193.4 915.6,196.2 914.4,199.1 918.6,199.5 917.0,200.8 921.2,201.9 920.4,202.7 923.2,205.7 923.2,207.4 925.1,209.3 924.6,211.1 926.8,210.9 925.7,212.6 928.1,213.9 928.7,216.3 930.5,218.4 932.9,219.4 933.2,219.1 936.7,218.9 936.5,219.9 939.8,222.2 940.5,224.5 942.4,225.7 944.5,225.7 945.3,225.4 948.2,226.1 949.2,228.2 952.8,228.0 955.0,228.9 956.0,231.0 960.7,230.0 960.4,228.6 963.9,231.2 963.2,234.1 966.8,236.0 965.8,238.7 969.4,239.7 971.0,239.1 971.3,237.8 975.0,240.0 976.8,240.3 977.8,239.1 977.8,240.7 981.1,240.0 983.4,237.8 983.1,239.3 986.3,239.8 987.3,242.1 985.9,242.3 986.0,246.0 987.9,248.7 985.8,249.8 984.0,251.1 984.8,255.6 983.3,255.2 981.5,257.6 981.5,259.1 979.9,260.2 977.9,262.7 977.7,263.1 976.6,265.8 974.9,266.5 973.5,268.3 972.7,271.4 972.8,271.4 970.6,274.5 972.5,277.1 972.7,276.1 970.4,280.4 969.4,281.0 968.6,281.9 967.2,284.8 966.6,286.0 967.2,286.4 967.3,290.5 965.0,290.6 963.4,292.5 965.3,296.9 964.1,297.7 964.5,299.9 965.2,303.0 961.9,305.7 962.1,305.5 962.7,309.3 961.3,311.2 960.0,310.9 959.3,313.9 956.6,314.2 955.2,315.7 955.0,317.8 953.9,317.3 954.1,320.7 952.3,319.8 949.1,323.1 947.3,322.9 945.0,325.6 944.1,326.3 943.8,328.0 941.4,329.7 940.3,330.4 939.9,333.0 938.8,334.2 939.7,335.9 940.6,340.4 937.8,340.9 938.0,342.1 937.8,343.8 936.9,347.5 939.4,347.1 937.4,348.4 938.7,351.5 937.2,354.8 936.6,356.4 938.5,357.5 937.5,362.1 940.3,363.9 938.0,364.1 935.9,366.5 933.7,366.8 931.3,368.5 931.1,369.7 929.8,368.6 927.8,370.1 924.0,367.7 921.5,368.9 921.2,370.2 917.6,370.0 914.7,372.7 913.2,370.6 912.6,370.1 912.3,370.4 908.1,368.9 905.9,372.5 902.6,371.3 901.1,373.0 899.5,375.5 899.5,374.4 898.5,376.8 897.6,376.1 893.9,373.7 893.2,372.7 891.8,372.8 888.6,373.0 889.4,372.1 884.7,370.2 886.8,367.1 882.8,365.6 883.8,362.8 880.5,362.0 880.4,361.3 877.7,359.8 877.9,358.9 875.2,356.1 877.6,354.8 875.2,352.0 875.9,350.3 875.4,348.6 874.7,346.5 873.3,345.3 871.1,346.0 870.8,344.7 867.3,342.0 865.7,342.6 864.3,344.1 861.0,342.7 859.5,341.1 858.0,341.1 854.8,340.4 853.3,338.1 852.3,337.0 848.1,338.5 848.5,339.2 845.9,337.1 842.8,335.2 844.0,335.4 842.0,336.1 841.8,336.9 838.7,338.4 836.8,338.6 833.0,341.9 831.9,340.5 829.5,344.4 828.7,343.8 826.1,343.7 825.4,345.7 822.7,344.2 821.6,345.7 819.2,344.4 817.9,346.7 815.8,347.3 813.5,346.3 814.1,347.2 809.4,347.9 809.4,345.6 807.4,343.0 803.6,343.4 804.1,344.4 800.0,343.2 798.0,341.8 796.6,341.9 792.4,340.0 793.7,337.8 789.1,336.7 789.5,337.2 787.0,338.0 784.6,337.3 784.7,334.6 780.6,331.6 781.3,330.3 778.7,333.6 777.5,333.5 774.6,335.7 772.3,334.8 770.9,336.3 768.1,336.7 767.4,334.7 764.2,336.6 762.4,335.8 760.0,337.7 759.3,338.7 758.5,337.5 756.6,340.8 754.4,340.2 750.1,340.0 748.3,340.4 746.1,338.6 746.9,341.3 745.4,341.7 745.6,343.7 744.0,346.9 741.0,348.2 741.7,350.0 743.5,353.7 742.7,352.9 739.1,356.3 736.8,355.7 734.7,358.3 733.2,359.0 733.8,360.2 732.5,362.3 732.8,363.4 729.9,365.4 730.5,369.7 731.7,370.7 729.7,371.8 728.4,375.5 728.0,374.7 726.8,379.3 724.9,378.6 723.9,382.1 723.7,383.3 722.8,384.6 720.9,387.7 719.7,386.7 716.5,388.0 715.6,387.0 713.0,387.0 712.2,389.6 709.7,387.5 708.7,389.9 706.3,391.2 705.1,391.5 702.9,393.4 701.3,392.2 699.6,395.6 698.0,394.2 694.6,396.6 693.6,396.9 691.6,396.9 691.7,399.7 689.7,397.9 688.0,402.0 685.2,400.4 683.3,403.5 683.0,404.5 681.5,404.6 681.5,408.4 678.9,407.0 677.0,410.8 675.1,410.7 673.4,411.9 673.6,414.4 669.5,411.5 670.4,410.0 668.0,406.7 668.3,405.2 666.2,404.5 662.8,405.8 662.0,408.5 661.3,407.0 659.9,408.7 657.8,407.4 657.9,405.0 656.0,402.7 654.5,402.4 654.7,401.3 651.8,400.9 649.0,400.7 649.5,401.8 646.4,398.8 642.6,398.6 642.2,399.1 640.8,399.5 638.0,398.6 638.6,396.3 635.1,393.9 633.4,398.1 631.9,396.6 632.8,400.2 631.3,399.5 629.7,402.2 627.1,402.6 624.2,404.2 623.2,406.5 623.7,407.3 624.0,410.0 621.6,412.1 618.3,412.6 618.0,416.8 619.9,416.3 616.1,418.1 614.7,417.7 613.0,416.7 611.1,419.3 608.7,418.6 604.9,421.6 603.9,420.6 601.7,421.1 601.4,422.9 599.5,420.8 597.5,422.9 595.3,422.1 592.4,424.7 591.1,423.9 587.9,424.4 588.7,426.7 586.9,425.1 583.4,424.6 581.3,425.6 579.8,423.5 578.1,423.4 573.4,425.3 572.7,423.9 572.3,424.2 569.3,425.5 567.5,423.2 566.4,423.1 566.3,424.9 563.1,422.9 559.2,425.6 556.5,425.6 554.3,427.3 554.7,427.7 552.7,425.6 549.8,427.7 547.7,426.1 544.8,428.6 543.2,429.3 543.0,431.2 542.2,432.9 542.3,433.7 540.1,437.3 537.4,436.1 537.3,440.3 537.3,441.4 535.8,442.5 535.5,445.5 536.3,447.5 534.2,448.4 534.0,451.6 535.2,455.1 535.0,457.2 538.2,457.7 536.5,458.8 541.1,459.5 539.3,462.6 543.6,465.2 541.8,466.7 545.8,468.9 542.4,467.7 540.0,469.3 537.0,469.3 535.7,469.5 534.4,470.8 533.6,469.0 530.9,472.6 529.3,471.3 526.3,473.1 526.0,475.2 524.3,474.2 525.1,477.5 522.6,477.0 519.9,478.4 516.0,478.2 513.6,476.3 513.3,478.7 511.4,477.4 510.3,477.8 506.9,478.9 505.7,478.0 505.1,481.2 501.7,480.4 498.4,480.0 495.2,480.1 494.6,477.6 494.3,480.2 491.6,480.6 490.0,480.8 486.8,482.8 486.1,481.4 483.9,483.6 482.4,483.9 479.3,481.8 476.0,482.7 476.7,481.4 474.5,480.7 471.8,483.2 470.9,482.6 469.5,481.3 466.5,482.6 463.3,481.0 462.8,479.8 459.6,482.1 455.6,481.6 456.1,481.0 454.1,482.4 450.9,480.0 450.4,478.8 449.4,480.2 447.2,478.9 443.6,480.1 442.5,482.3 441.1,480.5 436.3,481.1 434.4,480.5 433.5,478.3 432.8,480.8 431.2,480.4 427.4,481.3 426.6,483.0 425.1,480.9 422.3,482.8 419.0,482.3 416.9,479.1 415.3,478.9 413.0,480.0 411.4,479.1 408.5,477.2 408.5,476.4 404.2,476.2 405.2,475.0 401.2,473.0 400.5,472.2 399.1,472.4 395.6,471.8 396.5,469.6 391.9,467.8 393.4,465.9 388.6,465.3 390.2,464.5 385.5,461.9 387.1,460.0 382.7,459.7 384.0,459.1 380.3,458.2 381.0,457.9 378.2,456.4 378.0,453.1 376.3,450.7 375.1,449.8 374.4,448.5 372.4,446.8 372.3,445.9 369.7,444.4 369.9,441.9 367.2,440.8 367.1,441.2 364.8,440.9 364.0,439.4 362.4,438.2 360.6,436.3 359.8,433.2 357.2,431.4 356.9,431.7 354.8,434.7 352.0,433.6 347.5,435.2 346.1,433.2 345.5,432.6 340.9,432.9 340.9,431.9 338.8,430.8 335.6,431.6 336.2,431.7 332.9,427.5 334.4,424.6 332.8,422.1 334.9,422.6 335.3,420.3 333.3,420.2 332.9,418.9 330.7,416.3 330.1,414.9 327.7,412.4 327.5,410.5 324.4,410.5 325.3,409.1 322.3,407.2 323.8,404.5 323.9,400.9 323.1,399.1 323.3,396.6 321.3,396.7 322.9,395.3 318.5,395.2 319.5,393.3 317.0,391.0 317.3,388.5 315.3,384.9 316.9,383.5 314.5,380.9 315.1,380.7 313.6,379.8 312.0,377.2 312.2,375.6 308.8,373.4 309.7,371.1 305.8,371.1 306.6,370.0 304.6,368.2 305.7,368.0 308.2,365.6 307.2,361.8 307.8,361.9 308.7,359.2 306.5,356.1 307.3,353.7 310.5,354.0 313.1,349.5 312.8,350.9 311.4,346.5 312.6,346.5 316.0,344.4 318.3,342.0 318.2,341.7Z" fill="#fbf03a"/></g>
<g stroke="#222" stroke-width="1.3" stroke-opacity="0.7" stroke-linejoin="round"><path d="M489.3,197.4 488.5,198.6 490.0,196.2 491.9,197.1 495.8,195.9 498.5,194.2 499.0,196.6 501.6,195.7 503.4,196.9 506.6,196.9 507.2,193.8 507.3,194.9 509.7,193.5 512.4,193.4 516.9,194.8 518.3,191.7 520.1,194.2 520.2,192.2 520.9,192.0 523.1,191.0 525.4,189.9 529.8,188.9 531.8,186.4 534.6,188.2 533.3,188.6 537.0,188.8 537.8,189.8 538.7,191.5 542.2,193.0 541.3,193.6 545.4,193.5 545.2,194.1 547.5,195.8 549.4,197.9 550.2,199.4 553.4,199.7 553.1,199.5 557.1,200.0 557.6,202.8 558.8,202.2 560.0,200.9 564.4,201.7 567.7,199.0 568.4,200.1 570.2,200.1 571.6,198.4 574.9,200.4 576.0,199.0 576.0,200.0 579.0,200.9 582.2,199.1 583.0,199.0 586.3,201.2 588.0,202.4 589.7,202.0 593.1,203.0 593.4,204.5 595.6,202.4 597.4,202.5 600.6,203.3 600.9,200.8 602.3,202.9 603.6,202.3 606.8,202.5 611.0,202.7 612.5,199.2 614.1,200.5 613.4,199.3 617.6,199.7 616.8,201.7 620.3,204.4 620.4,205.3 622.8,205.9 623.9,207.6 625.1,209.2 627.2,210.8 627.3,213.9 630.1,216.4 630.9,215.8 633.6,214.2 635.4,215.5 637.0,217.2 639.6,217.1 640.1,217.7 642.8,219.8 644.3,218.9 645.2,217.3 648.2,219.2 650.2,220.3 651.6,219.8 654.1,222.4 658.6,220.7 659.8,219.3 660.2,220.0 664.1,217.8 665.6,219.2 665.9,221.1 667.5,220.1 670.3,222.0 671.1,222.4 672.1,222.8 673.6,224.6 674.3,225.4 676.8,227.4 676.1,228.3 674.5,231.6 673.5,232.7 676.0,235.1 676.8,234.9 679.6,233.4 681.8,233.6 682.2,235.5 686.1,236.9 686.4,237.2 687.2,241.2 686.3,243.3 684.7,243.0 686.4,246.2 684.8,248.2 687.3,249.8 686.7,249.5 683.7,253.5 681.7,252.0 680.6,256.0 678.9,255.9 679.8,256.2 682.2,258.5 682.5,260.1 685.2,262.6 683.0,264.6 685.3,265.9 683.6,269.1 685.3,270.6 684.2,272.7 685.5,272.7 683.9,271.6 683.3,273.5 681.7,274.2 678.3,272.2 677.9,271.9 676.2,272.3 671.6,270.2 672.0,269.3 669.2,272.7 667.0,271.7 664.0,272.3 662.2,273.9 662.1,272.7 661.0,274.6 660.1,273.0 655.9,272.0 653.6,273.0 652.8,272.9 648.4,271.5 648.5,271.5 645.2,271.7 642.8,269.7 642.8,267.6 638.1,268.3 638.8,269.6 637.1,268.4 634.8,268.4 632.6,268.6 631.1,266.0 630.9,267.8 626.9,268.5 623.8,268.0 621.2,270.4 620.7,269.1 619.8,268.7 615.9,269.9 615.3,267.7 614.7,268.5 612.2,269.7 608.9,268.2 606.1,270.1 608.8,266.7 607.8,266.8 607.7,264.3 609.2,261.4 608.4,259.9 609.4,258.8 612.8,254.0 612.8,254.5 611.1,251.4 612.2,248.4 613.1,248.2 612.5,245.2 614.4,242.9 616.4,242.3 613.9,240.4 614.3,236.8 615.3,237.7 614.6,235.4 617.5,231.9 616.4,231.4 615.6,229.2 616.7,225.9 613.5,226.7 612.8,224.4 611.5,224.4 608.6,226.3 606.4,224.8 604.7,227.5 603.4,227.9 601.0,226.3 599.5,227.8 596.3,226.4 595.2,228.6 592.8,228.3 593.5,227.3 590.0,229.2 587.0,228.7 586.8,225.8 582.1,225.9 580.6,225.9 579.7,224.5 576.6,228.4 574.7,227.9 573.5,226.5 573.5,225.9 572.5,222.5 575.1,219.5 571.0,220.2 569.0,219.4 566.3,222.9 565.2,221.1 564.0,224.1 562.2,224.9 561.0,225.3 557.8,226.3 556.5,225.8 554.5,228.1 554.6,226.6 552.3,230.0 550.5,228.5 547.7,231.1 545.8,231.8 546.2,232.2 544.8,235.8 542.8,234.9 541.0,238.1 538.3,238.9 536.7,240.0 537.6,242.5 537.8,242.9 536.1,245.0 534.8,246.8 531.9,247.2 529.3,250.7 528.9,249.8 527.4,253.8 525.8,253.3 524.7,255.9 521.2,257.4 520.2,256.4 518.2,259.2 518.1,258.3 516.5,259.5 515.2,259.7 512.4,260.5 510.3,261.5 508.9,261.9 508.1,264.3 507.1,263.5 505.0,267.6 502.7,266.1 500.5,266.0 498.7,266.0 498.0,264.6 494.9,262.4 495.2,260.9 491.4,260.2 492.3,259.0 488.3,256.9 489.4,255.3 485.5,254.7 486.2,254.3 482.9,253.3 482.7,252.0 480.6,250.8 478.5,248.7 478.4,247.1 474.1,246.4 475.5,246.1 470.8,245.6 471.4,244.4 468.7,242.9 468.9,239.7 466.9,237.7 465.8,236.8 464.9,235.3 462.5,234.6 462.6,234.5 459.0,232.4 460.0,230.0 458.2,227.8 458.8,227.1 461.7,223.5 460.9,221.6 462.0,220.7 462.2,218.6 460.2,215.7 462.7,216.2 463.7,213.2 464.0,211.5 465.0,210.8 465.4,207.8 466.0,208.1 469.5,204.6 472.1,204.6 473.8,202.0 475.1,200.9 474.9,200.8 476.2,199.4 478.5,200.4 481.5,198.0 485.3,200.2 487.2,199.1Z" fill="#f5b651"/><path d="M699.9,200.5 702.8,199.8 704.1,197.2 706.5,196.9 706.4,193.9 707.7,193.9 709.2,191.0 711.6,190.9 714.4,188.5 715.1,188.2 716.9,186.4 717.0,185.8 720.1,184.6 722.0,184.7 726.7,187.5 727.4,186.8 728.6,185.3 733.3,186.7 732.1,187.7 735.4,188.8 735.5,191.2 733.3,192.2 733.6,194.7 733.1,197.4 731.2,198.2 731.6,201.4 734.1,201.0 735.1,200.9 737.8,202.4 738.5,204.5 741.8,205.6 741.7,205.8 744.2,208.1 744.8,208.3 745.3,210.2 746.1,212.2 746.5,214.0 747.3,217.6 746.9,219.0 749.8,220.4 748.9,221.8 752.8,221.9 751.5,224.2 756.1,226.6 754.6,228.2 759.1,230.7 756.7,231.1 753.8,232.8 752.0,235.1 750.8,235.5 751.0,238.2 751.9,239.3 750.2,240.3 746.6,243.7 744.2,242.5 744.3,246.2 745.5,247.0 745.3,247.5 743.7,250.8 741.3,248.8 738.5,252.2 737.0,251.2 735.2,251.9 732.8,250.1 732.3,249.7 729.7,248.6 729.5,247.8 727.0,247.4 726.9,245.0 724.4,242.0 724.2,240.6 722.2,239.4 721.4,237.5 720.2,236.4 718.6,235.3 718.2,232.6 715.8,230.4 718.7,231.3 719.1,229.2 720.9,227.9 721.9,228.2 723.0,224.5 723.7,223.8 725.4,221.4 727.1,218.8 723.4,217.9 723.7,216.0 721.4,215.8 721.3,214.6 719.8,212.2 720.2,210.6 718.1,207.2 716.9,205.4 716.0,204.5 711.5,205.8 712.5,206.7 708.4,205.0 706.8,202.2 706.4,201.5 702.3,202.1 702.7,202.0Z" fill="#f5b651"/><path d="M489.3,197.4 488.7,198.1 487.4,193.3 488.9,194.0 492.4,191.1 493.7,188.7 492.5,188.4 492.3,184.9 493.9,184.7 497.8,183.1 499.6,181.2 501.6,181.2 502.2,177.7 502.4,178.9 505.0,174.4 506.1,176.0 507.8,171.5 508.1,172.1 508.5,170.1 509.8,167.8 512.1,167.4 513.8,165.7 515.7,164.4 517.0,165.9 518.2,164.8 521.4,164.3 522.7,166.7 521.9,166.0 525.7,165.2 528.0,166.7 529.0,165.1 531.3,164.7 533.9,165.8 538.3,163.2 539.1,165.3 539.8,164.9 540.3,164.9 542.2,165.0 546.6,161.6 548.6,162.9 551.0,161.6 551.8,161.8 554.7,163.8 557.9,162.2 556.4,165.8 558.3,168.4 556.1,169.1 558.4,169.7 556.8,170.5 558.4,174.3 557.8,177.2 560.4,181.0 561.0,181.3 561.5,182.5 565.5,180.2 566.2,180.8 566.7,182.4 570.8,181.6 571.1,183.7 572.5,185.4 577.1,183.4 577.6,183.8 579.8,182.9 581.5,179.9 583.3,181.9 583.4,178.5 585.3,179.0 586.0,179.1 589.4,176.5 592.1,176.9 593.0,171.9 590.6,170.5 591.8,169.4 592.8,164.7 592.5,165.1 595.5,162.4 596.0,162.1 597.7,161.8 598.4,159.5 601.5,161.2 603.7,157.6 606.4,159.6 606.7,155.4 606.8,156.4 609.8,152.8 612.6,152.7 614.3,150.4 615.8,148.9 615.0,147.8 614.6,145.3 618.8,145.4 617.1,147.0 621.4,148.1 620.5,149.7 623.9,153.0 623.8,154.4 626.2,156.3 626.1,157.6 628.4,157.7 626.5,160.9 629.3,163.0 627.5,167.4 629.3,169.3 629.8,171.8 632.4,171.7 631.7,172.9 634.3,173.3 634.2,176.1 635.4,177.1 636.6,175.7 639.2,176.8 641.2,178.3 640.3,178.4 644.2,179.7 642.9,179.8 644.8,182.7 647.5,184.1 647.2,183.6 648.8,183.1 652.2,185.1 653.5,182.4 655.3,182.8 655.2,183.1 656.1,184.7 656.9,187.5 659.6,191.7 658.0,194.1 659.5,195.9 657.3,195.8 659.8,197.7 658.2,199.4 660.1,203.0 660.5,202.9 658.9,205.5 659.4,208.6 658.3,209.8 655.6,211.8 656.6,215.5 657.5,216.3 655.0,218.3 654.1,222.4 651.6,219.8 650.2,220.3 648.2,219.2 645.2,217.3 644.3,218.9 642.8,219.8 640.1,217.7 639.6,217.1 637.0,217.2 635.4,215.5 633.6,214.2 630.9,215.8 630.1,216.4 627.3,213.9 627.2,210.8 625.1,209.2 623.9,207.6 622.8,205.9 620.4,205.3 620.3,204.4 616.8,201.7 617.6,199.7 613.4,199.3 614.1,200.5 612.5,199.2 611.0,202.7 606.8,202.5 603.6,202.3 602.3,202.9 600.9,200.8 600.6,203.3 597.4,202.5 595.6,202.4 593.4,204.5 593.1,203.0 589.7,202.0 588.0,202.4 586.3,201.2 583.0,199.0 582.2,199.1 579.0,200.9 576.0,200.0 576.0,199.0 574.9,200.4 571.6,198.4 570.2,200.1 568.4,200.1 567.7,199.0 564.4,201.7 560.0,200.9 558.8,202.2 557.6,202.8 557.1,200.0 553.1,199.5 553.4,199.7 550.2,199.4 549.4,197.9 547.5,195.8 545.2,194.1 545.4,193.5 541.3,193.6 542.2,193.0 538.7,191.5 537.8,189.8 537.0,188.8 533.3,188.6 534.6,188.2 531.8,186.4 529.8,188.9 525.4,189.9 523.1,191.0 520.9,192.0 520.2,192.2 520.1,194.2 518.3,191.7 516.9,194.8 512.4,193.4 509.7,193.5 507.3,194.9 507.2,193.8 506.6,196.9 503.4,196.9 501.6,195.7 499.0,196.6 498.5,194.2 495.8,195.9 491.9,197.1 490.0,196.2 488.5,198.6Z" fill="#dc585e"/><path d="M670.3,222.0 671.6,218.2 674.1,217.1 676.3,218.2 678.5,216.8 679.5,216.7 682.4,219.4 683.0,221.4 685.7,220.9 686.9,220.9 688.3,222.2 691.2,222.1 691.0,218.8 691.9,219.0 694.9,215.8 696.0,214.4 694.0,213.4 693.9,210.6 697.1,209.5 699.1,208.4 698.8,205.0 699.3,205.4 700.2,202.0 699.9,200.5 702.7,202.0 702.3,202.1 706.4,201.5 706.8,202.2 708.4,205.0 712.5,206.7 711.5,205.8 716.0,204.5 716.9,205.4 718.1,207.2 720.2,210.6 719.8,212.2 721.3,214.6 721.4,215.8 723.7,216.0 723.4,217.9 727.1,218.8 725.4,221.4 723.7,223.8 723.0,224.5 721.9,228.2 720.9,227.9 719.1,229.2 718.7,231.3 715.8,230.4 718.2,232.6 718.6,235.3 720.2,236.4 721.4,237.5 722.2,239.4 724.2,240.6 724.4,242.0 726.9,245.0 727.0,247.4 729.5,247.8 729.7,248.6 732.3,249.7 732.8,250.1 735.2,251.9 735.1,255.9 734.5,256.8 733.5,257.4 730.4,259.1 728.9,259.2 728.0,261.4 727.2,261.0 726.7,263.7 723.7,263.3 722.3,266.1 719.7,266.0 719.0,268.1 718.1,271.7 719.3,271.2 718.3,275.0 715.3,276.9 715.7,278.1 712.8,277.9 713.4,278.7 710.4,277.8 708.4,276.6 709.2,277.1 704.7,277.3 704.7,274.9 703.3,273.3 699.9,275.3 697.2,275.0 695.6,274.3 694.3,276.3 689.7,274.9 688.7,273.0 688.7,274.0 685.5,272.7 684.2,272.7 685.3,270.6 683.6,269.1 685.3,265.9 683.0,264.6 685.2,262.6 682.5,260.1 682.2,258.5 679.8,256.2 678.9,255.9 680.6,256.0 681.7,252.0 683.7,253.5 686.7,249.5 687.3,249.8 684.8,248.2 686.4,246.2 684.7,243.0 686.3,243.3 687.2,241.2 686.4,237.2 686.1,236.9 682.2,235.5 681.8,233.6 679.6,233.4 676.8,234.9 676.0,235.1 673.5,232.7 674.5,231.6 676.1,228.3 676.8,227.4 674.3,225.4 673.6,224.6 672.1,222.8 671.1,222.4Z" fill="#dc585e"/><path d="M800.4,198.4 800.0,198.4 801.7,194.9 804.8,193.3 804.7,193.3 802.6,189.1 805.1,189.9 807.2,188.9 811.5,188.3 813.3,188.3 815.6,187.9 813.9,185.2 811.8,183.4 812.1,182.4 809.2,180.6 810.5,179.8 815.0,179.4 817.2,181.5 819.0,179.3 820.9,180.8 823.0,180.1 826.7,179.2 826.9,180.1 828.7,175.5 830.5,177.3 834.1,172.8 835.3,174.5 835.8,175.0 839.3,174.9 839.6,176.4 841.8,177.9 844.2,176.8 844.2,175.7 847.7,177.7 848.2,180.7 850.0,181.3 852.9,180.8 854.7,181.1 855.9,179.4 857.8,178.7 861.1,179.9 863.3,177.0 866.1,178.4 865.8,179.1 867.2,178.1 867.5,179.1 871.1,176.1 874.2,176.5 877.5,176.6 876.9,176.0 880.0,176.3 880.9,178.4 882.0,181.4 885.0,183.4 884.3,183.7 888.6,183.3 887.2,183.8 891.2,185.2 891.2,187.1 893.0,188.8 895.2,189.8 895.6,190.3 896.8,187.5 898.4,187.2 899.3,184.6 901.3,185.1 903.4,187.5 904.1,190.4 906.9,191.9 907.5,191.6 909.7,190.7 911.6,191.2 912.2,193.4 915.6,196.2 914.4,199.1 918.6,199.5 917.0,200.8 921.2,201.9 920.4,202.7 923.2,205.7 923.2,207.4 925.1,209.3 924.6,211.1 926.8,210.9 925.7,212.6 928.1,213.9 928.7,216.3 930.5,218.4 932.9,219.4 933.2,219.1 936.7,218.9 936.5,219.9 939.8,222.2 940.5,224.5 942.4,225.7 944.5,225.7 945.3,225.4 948.2,226.1 949.2,228.2 952.8,228.0 955.0,228.9 956.0,231.0 960.7,230.0 960.4,228.6 963.9,231.2 963.2,234.1 966.8,236.0 965.8,238.7 969.4,239.7 971.0,239.1 971.3,237.8 975.0,240.0 976.8,240.3 977.8,239.1 977.8,240.7 981.1,240.0 983.4,237.8 983.1,239.3 986.3,239.8 987.3,242.1 985.9,242.3 986.0,246.0 987.9,248.7 985.8,249.8 984.0,251.1 984.8,255.6 983.3,255.2 981.5,257.6 981.5,259.1 979.9,260.2 977.9,262.7 977.7,263.1 976.6,265.8 974.9,266.5 973.5,268.3 972.7,271.4 972.8,271.4 970.6,274.5 972.5,277.1 972.7,276.1 970.4,280.4 969.4,281.0 968.6,281.9 967.2,284.8 966.6,286.0 967.2,286.4 967.3,290.5 965.0,290.6 963.4,292.5 965.3,296.9 964.1,297.7 964.5,299.9 965.2,303.0 961.9,305.7 962.1,305.5 962.7,309.3 961.3,311.2 960.0,310.9 959.3,313.9 956.6,314.2 955.2,315.7 955.0,317.8 953.9,317.3 954.1,320.7 952.3,319.8 949.1,323.1 947.3,322.9 945.0,325.6 944.1,326.3 943.8,328.0 941.4,329.7 940.3,330.4 939.9,333.0 938.8,334.2 939.7,335.9 940.6,340.4 937.8,340.9 938.0,342.1 937.8,343.8 936.9,347.5 939.4,347.1 937.4,348.4 938.7,351.5 937.2,354.8 936.6,356.4 938.5,357.5 937.5,362.1 940.3,363.9 938.0,364.1 935.9,366.5 933.7,366.8 931.3,368.5 931.1,369.7 929.8,368.6 927.8,370.1 924.0,367.7 921.5,368.9 921.2,370.2 917.6,370.0 914.7,372.7 913.2,370.6 912.6,370.1 912.3,370.4 908.1,368.9 905.9,372.5 902.6,371.3 901.1,373.0 899.5,375.5 899.5,374.4 898.5,376.8 897.6,376.1 893.9,373.7 893.2,372.7 891.8,372.8 888.6,373.0 889.4,372.1 884.7,370.2 886.8,367.1 882.8,365.6 883.8,362.8 880.5,362.0 880.4,361.3 877.7,359.8 877.9,358.9 875.2,356.1 877.6,354.8 875.2,352.0 875.9,350.3 875.4,348.6 874.7,346.5 873.3,345.3 871.1,346.0 870.8,344.7 867.3,342.0 865.7,342.6 864.3,344.1 861.0,342.7 859.5,341.1 858.0,341.1 854.8,340.4 853.3,338.1 852.3,337.0 848.1,338.5 848.5,339.2 845.9,337.1 842.8,335.2 844.0,335.4 842.0,336.1 841.8,336.9 838.7,338.4 836.8,338.6 833.0,341.9 831.9,340.5 829.5,344.4 828.7,343.8 826.1,343.7 825.4,345.7 822.7,344.2 821.6,345.7 819.2,344.4 817.9,346.7 815.8,347.3 813.5,346.3 814.1,347.2 809.4,347.9 809.4,345.6 807.4,343.0 803.6,343.4 804.1,344.4 800.0,343.2 798.0,341.8 796.6,341.9 792.4,340.0 793.7,337.8 789.1,336.7 789.5,337.2 787.0,338.0 784.6,337.3 784.7,334.6 780.6,331.6 781.3,330.3 778.7,333.6 777.5,333.5 774.6,335.7 772.3,334.8 770.9,336.3 768.1,336.7 767.4,334.7 764.2,336.6 762.4,335.8 760.0,337.7 759.3,338.7 758.5,337.5 756.6,340.8 754.4,340.2 750.1,340.0 748.3,340.4 746.1,338.6 746.9,341.3 745.4,341.7 745.6,343.7 744.0,346.9 741.0,348.2 741.7,350.0 743.5,353.7 742.7,352.9 739.1,356.3 736.8,355.7 734.7,358.3 733.2,359.0 733.8,360.2 732.5,362.3 729.9,360.2 728.5,361.6 726.7,363.4 722.1,362.0 721.7,362.3 720.8,363.0 716.8,360.3 717.0,358.7 714.6,359.2 712.3,359.8 712.4,358.4 708.5,355.9 708.9,354.5 706.0,354.7 705.1,354.0 702.7,352.6 701.7,352.3 699.5,351.0 698.6,347.6 696.6,345.6 695.7,344.1 694.0,342.0 693.2,342.5 695.5,340.7 693.1,338.7 694.2,335.6 691.8,332.1 692.8,330.2 690.6,327.9 688.5,327.9 688.4,329.3 685.3,329.9 685.6,326.6 681.8,324.2 683.8,321.1 680.3,318.9 682.1,317.7 680.1,315.6 680.8,314.6 678.6,311.3 679.4,309.9 675.8,307.5 676.8,306.2 673.8,306.1 672.9,304.5 672.6,304.0 670.2,301.9 671.0,299.3 669.3,298.1 670.9,296.7 675.5,296.3 677.2,298.1 678.7,296.6 678.4,297.7 680.0,297.2 683.3,294.1 685.2,295.2 687.5,294.3 688.0,294.5 691.6,296.9 694.1,294.7 696.4,294.9 696.8,295.1 696.7,293.0 698.9,294.3 701.3,292.1 705.6,290.8 706.8,292.9 708.5,289.7 707.9,288.2 707.4,287.9 708.7,283.8 710.6,284.0 711.3,281.9 714.1,280.2 714.1,280.1 715.7,278.1 715.3,276.9 718.3,275.0 719.3,271.2 718.1,271.7 719.0,268.1 719.7,266.0 722.3,266.1 723.7,263.3 726.7,263.7 727.2,261.0 728.0,261.4 728.9,259.2 730.4,259.1 733.5,257.4 734.5,256.8 738.8,257.8 739.1,256.2 739.6,255.8 742.4,257.2 743.5,257.6 745.2,257.7 748.1,260.1 748.0,262.5 752.3,261.7 752.6,260.5 754.8,262.4 758.5,264.0 758.6,263.4 761.5,264.4 764.5,266.2 767.4,262.5 767.9,262.2 769.0,262.0 770.0,258.1 770.8,259.7 772.7,258.7 774.1,258.4 777.7,261.2 780.8,260.8 780.5,260.0 784.1,260.8 787.1,257.7 786.1,258.4 784.9,256.9 787.7,254.5 787.9,252.1 787.7,252.6 789.5,249.9 787.6,246.6 786.9,245.3 788.0,246.5 792.0,244.2 796.2,244.7 797.5,241.9 799.0,243.4 799.2,241.4 803.2,242.9 803.1,244.6 806.2,246.5 806.9,248.5 809.4,249.7 810.6,249.9 810.5,247.6 812.7,248.2 814.2,246.4 817.7,247.1 819.2,244.7 821.2,246.1 821.7,242.7 824.0,243.5 826.1,241.1 826.1,239.4 827.0,237.4 825.1,234.5 825.3,233.2 823.1,230.6 823.9,230.5 819.8,229.0 821.4,228.5 819.3,226.9 818.7,224.7 817.3,223.2 816.3,220.9 815.5,218.7 813.9,218.5 813.0,217.1 808.9,216.4 808.5,216.2 804.9,214.1 803.9,211.5 800.5,211.5 801.5,210.5 801.6,208.9 802.0,208.5 802.5,204.3 800.0,201.0Z" fill="#5a9f6a"/><path d="M428.2,343.3 429.3,339.8 433.1,340.1 434.3,336.1 432.7,334.9 432.9,333.2 435.0,330.0 435.6,328.8 436.0,326.9 438.2,323.6 439.1,323.4 437.8,320.1 438.5,318.1 441.5,317.9 442.4,313.2 441.1,314.2 442.2,310.8 444.6,308.9 443.9,310.7 447.1,311.4 450.2,311.3 450.0,313.0 454.0,315.0 455.5,314.4 456.6,312.7 459.3,313.7 461.4,316.0 461.8,316.5 464.9,316.2 466.1,317.5 466.8,318.4 470.5,317.1 470.0,316.5 472.5,318.8 475.2,321.2 476.1,318.9 479.6,319.0 481.6,316.6 483.4,316.3 484.4,314.0 484.9,313.2 485.4,313.6 488.6,311.6 491.5,313.0 492.4,315.4 496.4,314.5 498.4,315.2 497.5,316.2 499.5,317.2 497.0,320.1 499.6,322.6 499.2,326.0 502.6,327.4 501.0,329.4 503.2,329.8 502.8,332.1 503.7,332.1 506.5,330.1 507.3,329.1 510.3,330.8 511.6,327.8 514.7,329.5 516.1,328.9 518.1,328.4 519.3,327.5 521.2,325.0 521.9,324.9 522.9,322.5 525.5,321.2 526.4,320.5 526.6,317.3 527.6,318.2 527.6,314.2 529.6,314.7 533.3,312.1 534.8,310.5 536.9,310.5 537.8,306.6 538.3,308.2 541.0,304.0 542.5,305.0 544.7,302.6 545.8,301.3 545.3,301.7 546.8,298.1 549.5,301.3 550.4,301.0 553.9,300.6 557.0,302.2 556.3,302.5 558.3,304.9 556.7,306.0 560.4,308.9 558.6,310.4 562.2,311.3 562.2,312.8 564.2,312.7 566.2,314.7 566.1,317.1 570.1,318.0 569.6,318.2 571.9,319.2 574.6,320.5 573.6,320.6 578.3,319.8 577.7,320.5 580.0,322.9 582.7,323.8 585.5,321.9 587.4,322.6 588.1,319.8 590.9,319.3 592.4,320.9 595.6,318.9 595.8,320.2 597.0,319.5 598.3,319.1 601.9,321.2 606.1,319.1 605.9,318.7 608.6,319.9 612.4,318.2 612.1,319.8 613.4,321.0 616.3,319.1 618.0,320.4 619.0,320.3 622.2,318.8 624.2,320.6 625.9,323.2 629.3,322.6 630.8,322.3 633.0,323.7 636.0,323.0 636.9,322.3 639.2,325.0 641.5,327.2 641.4,327.7 644.9,327.0 645.2,327.2 646.6,328.9 649.9,330.9 647.7,329.3 645.9,333.4 643.2,332.4 640.3,335.5 640.5,336.0 640.2,337.5 639.5,339.6 636.5,338.9 633.3,342.5 630.8,341.4 630.7,342.6 628.8,343.8 629.0,343.6 626.7,345.4 625.3,344.9 622.0,347.0 620.4,346.3 618.9,348.6 618.1,348.5 617.1,350.0 614.5,352.0 612.6,351.4 609.5,355.6 608.7,355.3 609.1,356.3 611.7,358.3 610.0,362.3 611.2,363.6 610.2,364.8 608.7,367.5 610.2,371.1 609.6,371.6 607.5,374.1 607.2,377.2 606.1,376.5 603.8,381.0 604.7,381.3 606.6,382.5 604.4,386.4 602.9,384.9 600.5,382.6 600.3,380.7 597.3,379.5 597.1,378.7 594.6,378.3 593.3,378.2 592.3,377.5 591.2,377.9 588.4,380.4 589.8,383.5 589.3,382.3 588.8,385.8 590.5,387.9 587.9,388.5 586.0,390.1 583.9,391.9 583.3,392.1 582.4,394.8 581.2,394.9 579.0,397.3 576.4,397.2 574.7,399.7 573.2,398.8 572.8,401.0 570.8,400.8 568.2,399.4 564.9,402.5 561.5,400.9 560.1,402.7 558.6,403.6 559.1,404.9 557.4,406.5 556.2,405.5 552.2,408.9 549.6,406.3 546.3,406.4 545.8,406.2 543.3,404.4 541.0,405.1 540.8,406.7 538.2,403.6 539.7,400.8 540.5,399.8 540.0,397.7 542.4,392.9 541.9,393.4 540.7,390.6 542.7,388.2 545.3,387.2 545.3,385.8 544.9,382.1 546.0,383.2 545.2,381.5 542.8,381.4 542.8,380.2 540.5,377.6 540.8,376.1 538.5,373.9 539.7,371.7 537.0,371.6 538.1,370.1 536.6,368.7 535.3,367.7 536.1,364.5 533.5,364.9 532.1,365.2 529.7,367.8 528.2,366.8 528.2,369.8 526.3,369.6 525.6,371.0 522.0,372.1 520.0,373.0 516.3,375.2 515.3,374.0 512.9,377.4 512.8,376.6 510.7,375.9 509.5,377.3 506.9,376.2 502.8,378.0 501.0,376.6 498.9,380.4 499.3,380.2 499.5,382.3 497.7,384.6 494.8,384.9 493.5,387.4 494.1,389.3 492.6,387.7 492.1,386.2 488.4,385.3 489.8,384.8 485.1,384.1 486.4,382.8 482.4,381.3 482.4,380.2 479.5,378.9 478.2,376.8 476.8,375.0 474.1,374.8 473.9,374.0 472.2,371.5 472.1,370.5 470.2,367.3 472.3,365.0 469.0,362.6 471.1,360.6 468.6,360.5 468.7,359.0 467.5,359.0 463.0,361.7 460.9,359.6 459.7,359.7 457.3,359.4 454.1,357.2 452.9,358.3 451.0,359.9 448.6,358.1 447.9,356.2 445.1,356.6 444.1,355.8 442.4,354.2 439.6,355.3 439.2,356.5 436.6,354.1 435.8,351.3 434.6,349.9 432.1,348.3 432.2,346.5 428.6,346.1 429.5,344.8 425.6,341.7Z" fill="#5a9f6a"/></g>
<g fill="none" stroke="#1a1a1a" stroke-opacity="0.7" stroke-width="1.3" stroke-linejoin="round"><path d="M473.8,202.0 473.9,203.2 475.6,205.7 474.6,208.8 477.2,211.3 475.1,214.3 478.4,214.7 477.5,216.6 480.0,216.6 480.7,219.0 483.4,222.1 483.9,223.5 486.8,224.4 487.0,225.4 490.0,225.3 490.1,225.6 492.0,230.4 489.7,232.7 491.7,235.2 490.5,235.5 492.1,237.5 491.5,239.7 492.0,242.1 493.0,242.7 489.8,245.1 489.9,248.8 490.2,248.6 489.1,252.6 492.4,254.5 492.5,257.3 493.9,258.0 494.9,258.6 495.5,260.3 M488.5,198.3 492.5,200.2 491.2,201.4 494.7,203.4 493.9,206.1 495.6,207.6 495.1,209.8 496.9,209.6 495.4,211.4 499.1,212.2 497.9,214.2 501.8,217.6 500.9,219.0 504.5,220.5 504.4,222.2 507.2,222.5 508.0,224.6 509.7,227.7 510.9,229.2 511.9,231.7 513.3,232.7 513.8,233.0 515.2,235.5 513.4,234.8 514.8,239.2 513.7,241.4 513.3,242.2 514.2,246.1 512.3,248.8 513.7,250.7 511.5,250.3 514.2,252.3 514.6,254.0 516.8,258.2 M511.4,192.7 512.7,193.7 512.7,197.6 515.0,200.0 514.0,203.6 517.9,204.8 516.9,206.5 518.8,206.8 515.9,207.8 514.7,210.8 516.2,212.9 515.6,212.9 515.7,217.5 516.9,220.1 516.6,223.4 518.2,223.3 515.7,224.6 517.2,226.2 516.5,229.5 516.2,229.4 517.7,231.8 515.2,235.5 M525.8,193.7 524.1,194.7 527.2,195.6 527.5,197.7 529.4,198.6 528.6,201.6 529.9,202.6 530.6,205.1 530.4,205.1 534.6,206.3 534.5,207.9 536.8,208.6 539.7,208.7 539.0,209.4 543.0,211.0 544.9,208.7 547.4,208.5 547.7,206.8 548.4,206.0 551.0,205.7 551.4,202.4 551.3,200.4 553.1,200.8 M460.0,230.0 458.5,234.5 458.7,234.2 458.9,237.1 455.7,240.0 455.6,241.8 457.1,241.9 455.6,245.7 456.1,247.0 456.4,246.9 453.3,249.9 455.8,251.8 455.3,254.1 456.1,256.2 457.7,257.7 458.9,259.7 460.2,260.5 458.8,263.0 461.4,264.1 459.9,266.1 462.1,267.6 461.9,269.3 463.4,272.4 463.9,273.7 465.1,272.3 468.3,273.4 471.5,270.2 475.1,269.9 475.1,271.1 476.4,269.9 477.7,272.1 480.4,270.7 483.0,269.8 484.5,271.2 486.7,267.5 489.4,267.5 489.7,266.6 491.4,263.7 490.1,265.9 495.0,268.3 493.6,269.8 498.2,270.7 497.6,271.4 501.0,271.6 499.1,270.8 499.4,269.9 502.7,266.1 M430.2,263.7 431.1,267.3 432.9,266.5 431.0,271.5 427.2,271.1 426.2,274.2 427.4,276.6 427.0,276.9 425.2,281.3 427.3,283.5 425.6,284.9 428.1,286.8 427.3,286.5 427.7,287.9 430.2,288.9 429.6,290.9 433.5,294.3 432.5,296.6 436.9,296.8 435.6,297.5 440.3,298.7 438.8,299.4 443.4,299.7 442.8,301.3 445.0,303.5 447.3,304.5 447.4,304.1 450.2,303.7 449.8,306.0 449.1,305.9 446.1,308.7 444.6,308.9 M483.0,269.8 481.5,271.8 484.0,272.9 483.1,276.3 484.2,277.2 482.1,276.4 478.0,280.2 476.6,278.8 474.6,281.5 474.5,282.3 473.7,282.1 471.7,283.1 470.3,284.9 471.7,286.4 469.4,288.9 471.0,291.6 471.6,292.8 473.8,294.3 472.1,295.0 470.7,297.2 468.4,297.3 466.1,300.1 466.0,300.2 464.3,302.8 463.6,303.6 460.7,305.2 458.9,306.0 454.0,304.4 452.8,306.1 452.0,305.1 450.2,303.7 M484.2,277.2 487.1,278.5 486.7,280.0 490.7,281.1 490.0,281.7 493.4,282.3 494.1,283.4 495.5,285.2 495.6,285.8 492.4,288.7 493.4,291.9 493.3,293.7 492.6,295.4 494.5,299.4 492.2,300.9 494.4,301.5 493.7,301.6 494.2,303.3 493.7,306.1 492.3,306.4 492.2,308.6 489.2,309.8 487.5,311.3 484.9,313.2 M502.7,266.1 503.9,267.6 506.8,265.2 508.3,265.7 511.6,264.5 512.8,264.8 512.6,267.4 515.8,267.2 517.4,265.6 518.5,266.2 521.8,267.8 523.1,268.0 524.9,268.3 528.0,270.5 525.1,272.1 525.5,275.3 527.0,276.7 525.5,277.1 526.8,279.2 527.8,280.8 528.3,283.0 529.4,284.5 529.9,287.3 531.1,288.9 531.6,289.0 533.5,290.6 533.3,291.6 536.6,293.1 536.1,296.4 540.1,297.7 539.1,299.0 543.4,300.4 541.9,300.4 544.1,301.3 544.3,300.7 546.8,298.1 M528.0,270.5 531.3,270.6 532.2,268.4 533.8,268.5 533.8,265.7 535.0,266.0 536.3,264.4 539.1,263.1 542.3,265.7 543.4,267.1 546.9,266.0 549.1,267.2 550.1,267.4 553.1,268.0 553.3,269.4 555.7,270.6 556.8,271.9 M399.6,285.6 399.4,285.5 402.2,287.5 400.2,290.4 400.8,294.3 399.8,294.4 399.7,297.5 402.3,298.7 402.4,299.2 405.2,301.2 405.6,302.4 408.2,305.1 408.9,306.9 409.6,308.8 408.3,311.3 410.3,313.7 408.7,315.3 411.6,315.8 411.5,317.3 415.3,319.1 414.4,319.9 418.9,320.4 417.7,322.0 421.6,322.4 424.3,321.4 424.6,323.6 428.8,325.3 431.1,323.5 432.0,323.7 435.2,324.8 437.2,323.5 437.9,324.5 440.0,327.4 440.3,327.4 439.6,329.9 436.8,331.6 433.4,331.8 432.6,335.5 434.1,334.9 434.4,337.8 432.1,339.3 429.3,339.6 M369.7,291.1 371.6,292.2 373.3,292.6 373.7,293.3 377.0,294.1 376.1,294.6 380.5,295.9 378.9,299.0 383.4,302.1 382.8,301.5 382.4,305.5 383.2,307.7 379.9,307.5 380.0,311.1 381.1,312.4 380.3,314.5 384.0,316.2 383.6,318.4 386.6,321.6 386.5,322.3 388.7,323.4 389.1,323.4 392.5,323.1 393.0,324.2 394.4,325.1 395.2,322.3 396.0,324.0 398.0,321.0 400.1,321.1 403.0,320.1 404.1,317.2 405.7,318.4 406.0,314.2 408.7,315.3 M322.8,312.5 325.7,313.9 328.1,312.4 329.3,314.0 332.7,312.3 336.6,310.9 336.1,312.6 337.5,311.2 341.3,313.0 341.8,314.2 344.5,310.8 345.8,312.8 349.1,309.1 350.0,309.4 351.5,307.9 351.9,305.6 353.4,305.8 355.9,302.7 357.9,303.0 360.4,300.7 360.6,300.6 362.3,299.0 362.4,299.7 365.3,298.9 369.4,298.3 372.2,299.5 374.4,297.8 374.3,298.3 378.2,299.4 379.3,298.6 379.0,299.3 383.4,302.1 M318.7,330.4 322.2,331.5 323.8,328.9 324.6,329.0 324.9,330.1 328.7,328.6 330.7,330.7 330.8,331.5 334.3,329.7 337.5,331.0 340.0,329.7 340.5,328.2 342.4,330.3 344.2,328.2 344.9,329.1 347.5,327.1 349.8,326.9 352.8,326.5 354.4,323.6 355.7,325.1 356.7,320.6 358.4,321.9 361.1,319.0 361.5,319.1 363.6,321.9 367.6,323.5 366.8,323.1 365.9,325.7 366.1,326.6 365.2,327.6 363.7,331.5 363.2,330.2 363.4,333.9 361.7,334.1 358.1,335.4 357.0,337.1 355.1,336.0 354.7,339.4 352.1,337.1 350.0,340.8 M393.0,324.2 392.5,326.0 393.4,330.4 391.9,332.1 394.5,334.1 392.9,333.3 394.6,335.1 395.1,336.4 395.2,340.5 M388.7,323.4 385.8,323.0 383.8,326.0 381.9,327.2 381.8,328.0 382.9,331.4 381.8,330.4 378.8,334.7 376.9,334.0 375.4,336.9 373.9,338.2 M471.6,321.9 470.7,324.6 472.8,325.7 470.4,327.8 472.8,329.2 472.8,330.4 473.2,332.9 474.9,334.4 473.5,336.8 474.1,336.4 474.1,341.0 471.5,341.8 M498.4,315.2 496.8,316.2 499.1,317.6 497.1,320.7 498.4,322.4 498.5,324.5 499.1,325.0 501.8,328.0 500.1,330.4 501.6,334.1 498.8,334.9 501.0,335.8 500.9,335.8 502.8,338.6 502.8,341.7 M521.0,325.3 520.6,326.3 522.8,329.3 520.9,330.5 523.9,333.0 521.9,334.0 522.9,336.1 522.2,337.7 524.5,340.2 525.5,342.6 M613.4,199.3 615.6,197.2 617.1,197.1 620.5,194.0 623.2,194.8 623.5,191.3 624.8,192.2 625.0,189.3 626.6,189.2 629.1,187.6 629.1,184.8 630.1,185.4 631.0,181.2 631.1,180.5 631.9,179.3 634.2,176.1 M579.0,200.9 580.5,197.1 580.3,195.4 579.0,193.2 580.5,192.9 577.9,189.4 579.1,186.8 578.4,183.5 577.6,183.8 M574.9,201.1 574.3,203.8 577.5,204.2 575.5,205.6 576.9,209.0 574.4,210.3 575.1,211.8 576.1,212.3 574.9,217.0 574.9,216.5 575.1,219.5 M616.7,225.9 618.6,224.9 620.4,224.3 621.2,221.7 622.8,222.4 622.6,218.7 623.5,219.8 626.6,216.4 628.7,216.3 M580.6,225.9 578.3,226.4 580.3,228.1 580.2,232.6 579.5,233.2 581.1,235.2 578.9,237.9 577.5,241.6 579.0,240.9 577.8,243.7 578.6,246.1 580.7,247.9 578.8,247.3 580.1,249.3 577.6,252.0 578.2,255.6 579.2,256.7 579.1,258.3 582.1,260.7 580.2,264.1 579.1,265.3 578.7,265.6 576.8,269.8 575.8,269.2 577.4,271.6 577.3,273.9 574.4,274.6 573.0,276.1 574.1,279.5 M606.1,270.1 604.4,272.0 605.8,271.5 605.9,275.3 604.8,276.1 605.5,277.0 604.9,279.3 601.4,280.0 598.6,280.2 596.0,283.1 595.4,281.5 595.2,279.8 591.5,278.0 592.3,276.9 589.1,276.7 588.2,276.8 587.6,275.6 587.0,278.1 583.3,278.9 580.9,276.9 577.4,278.3 576.9,276.7 575.2,277.9 574.1,279.5 571.3,277.8 568.8,280.2 569.0,280.1 566.8,280.2 564.1,281.8 561.0,279.2 561.9,276.4 557.9,274.8 558.3,275.1 556.1,276.1 M564.1,281.8 563.7,281.6 561.6,284.1 563.6,286.7 564.0,289.5 562.9,288.7 564.4,291.0 562.4,293.5 560.8,294.9 562.4,295.2 560.9,297.4 564.8,300.1 564.1,304.2 565.9,306.5 564.1,308.1 564.9,307.9 565.3,309.3 565.0,310.8 567.2,312.4 567.6,314.5 570.9,316.4 570.4,318.4 574.4,320.1 573.5,320.6 577.7,320.6 577.0,321.5 M604.9,279.3 602.8,281.8 606.0,283.8 605.0,286.0 607.6,288.9 607.7,289.5 610.3,290.8 610.1,292.2 613.5,293.1 612.6,296.3 615.2,297.9 615.6,299.9 615.5,301.6 617.6,301.4 616.4,303.0 618.4,303.8 617.1,305.3 620.1,308.0 618.9,311.7 620.3,314.5 620.8,315.6 620.2,316.1 622.1,316.7 619.6,319.3 M655.9,272.0 656.6,275.8 657.1,278.1 657.2,281.5 658.7,283.0 660.4,284.2 660.3,285.3 663.4,285.7 662.6,287.8 664.1,289.2 662.3,292.9 665.2,294.7 662.9,298.0 665.0,298.6 665.0,300.5 664.1,299.4 664.9,304.3 664.4,303.3 661.2,306.9 658.4,308.1 659.0,309.1 660.7,312.7 658.5,312.0 655.5,315.8 653.8,315.3 651.4,318.7 650.9,318.9 649.5,320.2 646.8,323.3 645.4,321.9 642.6,325.4 642.2,325.8 M665.0,300.5 666.1,296.5 669.3,298.1 M719.7,266.0 720.2,268.7 722.8,270.6 723.5,273.3 726.1,275.9 726.8,276.1 729.3,277.1 730.0,279.2 732.3,280.5 732.8,282.9 734.7,285.1 735.0,285.2 736.7,286.0 736.8,287.5 738.7,288.3 738.7,291.0 740.7,293.3 741.7,291.9 744.5,291.4 745.2,288.8 745.7,288.9 747.0,286.2 747.8,285.6 751.1,283.9 753.3,281.9 754.8,281.6 756.7,278.6 756.0,280.2 759.7,280.3 761.6,279.7 761.2,281.8 765.3,283.0 767.3,281.0 768.6,280.8 770.9,282.2 774.0,280.3 775.7,280.9 777.5,279.8 778.2,278.8 780.0,280.8 781.3,277.4 783.8,278.6 785.0,277.8 786.8,275.3 787.1,275.8 788.7,272.5 789.2,271.7 789.2,270.4 792.3,267.4 792.5,265.5 793.0,267.3 795.1,267.0 797.8,266.4 797.4,267.9 802.1,270.8 800.9,272.3 804.9,271.5 805.6,270.8 807.0,272.4 810.4,274.6 810.4,275.2 M740.7,293.3 741.8,293.1 743.2,293.5 745.8,295.5 745.8,298.2 749.7,300.0 748.7,300.9 752.8,302.9 751.3,303.4 755.6,303.4 754.5,305.5 758.4,307.3 757.9,308.9 761.1,311.5 761.1,312.0 763.9,312.2 765.4,313.7 766.4,313.1 769.1,313.7 770.2,316.6 771.5,313.7 770.7,310.8 772.8,309.6 774.2,307.3 772.0,303.1 774.4,305.6 775.5,303.0 779.3,303.4 781.3,303.3 784.7,301.7 785.2,301.7 787.0,299.0 786.5,299.9 788.6,297.1 789.4,296.1 792.9,296.6 794.1,293.2 796.2,295.3 796.1,291.7 798.4,293.4 799.9,290.9 803.4,291.1 805.4,290.0 809.0,289.9 810.5,287.6 811.6,286.8 M711.3,281.9 710.6,284.0 708.7,283.8 707.4,287.9 707.9,288.2 708.5,289.7 706.8,292.9 703.6,294.0 703.5,295.4 704.8,300.0 703.8,299.3 705.1,302.1 706.8,302.8 707.3,303.6 708.4,305.3 709.1,306.0 709.7,309.0 710.0,311.3 711.8,312.8 710.8,315.0 714.5,315.1 712.8,316.7 717.1,318.8 716.2,321.8 718.6,325.8 716.9,327.4 719.4,328.8 717.8,329.0 M770.2,316.6 770.9,317.7 773.9,319.1 773.2,318.7 775.8,320.5 775.4,321.6 777.7,323.6 775.8,326.7 778.5,327.8 777.7,330.3 777.9,331.3 780.1,332.5 779.6,335.1 781.0,335.3 780.2,337.7 777.6,339.8 775.0,340.2 M759.1,230.7 759.0,227.5 760.6,228.4 761.6,225.1 765.0,225.2 767.3,222.8 768.4,221.5 769.9,221.0 769.7,218.1 771.8,219.0 773.8,215.7 775.1,216.3 776.9,214.3 778.9,215.3 779.4,217.8 780.5,216.9 783.7,215.5 784.8,216.6 784.9,216.5 789.7,215.2 790.6,217.1 792.5,218.0 794.2,216.7 796.9,218.4 799.5,216.1 800.9,214.2 802.2,215.5 M760.6,228.4 761.4,227.2 764.3,227.4 764.9,230.2 767.8,233.6 768.4,235.1 771.5,234.0 771.8,232.9 775.1,233.7 776.8,236.5 778.3,237.0 781.7,236.6 783.1,238.0 785.2,238.5 788.3,237.1 789.4,237.9 791.8,241.1 792.1,241.7 789.3,243.0 788.1,247.1 M845.5,191.9 845.6,193.4 848.0,193.2 849.3,194.7 850.6,197.0 852.8,198.4 853.2,200.9 855.9,202.3 855.5,202.1 857.0,205.2 856.2,206.0 857.5,208.6 855.3,209.3 858.7,212.3 858.2,213.9 861.0,217.3 859.4,218.5 862.2,220.6 860.0,219.8 858.0,223.8 859.6,226.2 858.2,227.0 858.8,230.7 859.1,233.3 859.3,235.4 862.8,236.3 862.1,235.7 866.4,235.2 865.1,237.0 869.6,240.6 865.7,240.3 864.0,241.5 860.9,240.2 860.5,243.3 858.3,242.2 857.8,243.3 855.0,246.4 852.8,245.1 853.8,249.3 854.6,249.9 853.1,250.9 852.1,253.6 852.0,255.3 850.0,255.4 849.8,258.5 852.5,260.5 850.7,264.5 854.8,266.1 854.3,268.1 856.2,268.9 856.1,269.2 857.7,270.9 857.2,271.6 856.8,274.6 859.0,276.2 857.6,279.5 859.9,281.3 859.6,283.4 863.3,284.6 861.4,285.8 863.6,287.5 862.9,289.0 863.6,292.2 862.7,295.4 862.2,297.7 864.4,298.1 863.9,298.3 866.9,300.8 864.7,303.7 865.4,306.9 863.6,307.5 864.2,310.0 866.2,311.8 866.1,315.5 868.7,316.6 866.3,317.8 867.4,317.4 866.7,319.6 866.7,322.3 868.5,326.1 867.0,326.7 867.9,328.8 868.4,331.9 865.2,333.7 863.5,334.0 864.5,338.7 863.6,338.4 862.9,340.1 864.2,343.3 M869.6,240.6 868.5,243.5 872.5,244.0 872.2,243.3 875.0,243.6 876.2,245.1 877.5,247.2 878.9,247.3 880.7,243.9 881.2,244.0 882.4,241.6 885.1,239.9 886.5,239.6 886.8,236.0 887.7,237.0 888.7,232.5 890.2,232.5 890.4,229.6 890.9,227.3 893.4,226.5 895.1,222.9 894.1,222.2 893.5,219.6 896.0,217.1 898.7,216.5 898.5,214.2 897.6,211.0 898.9,211.9 900.6,207.5 900.6,207.1 900.8,205.7 902.7,203.1 903.9,201.5 899.8,201.7 901.5,199.9 897.4,198.8 899.4,196.4 896.4,193.5 897.6,192.5 895.6,190.3 M878.3,202.8 879.4,204.9 877.4,205.8 874.3,208.3 874.2,211.3 875.2,210.9 874.0,214.8 872.4,216.2 873.3,216.6 871.2,220.1 870.4,221.7 872.7,222.4 871.2,223.4 871.9,227.7 871.6,227.6 868.7,229.5 870.2,233.3 869.9,235.4 M878.3,202.8 878.3,200.6 879.6,201.3 880.2,198.0 883.3,199.1 885.9,195.9 887.2,197.8 887.5,198.8 888.3,200.9 888.3,201.8 890.4,205.3 M893.5,219.6 896.6,223.4 895.8,225.1 898.4,227.8 898.4,227.9 901.8,229.8 900.5,230.6 904.5,233.1 902.3,235.2 907.3,237.5 907.7,235.9 909.0,235.4 913.3,237.1 912.5,236.6 914.8,237.3 916.1,237.9 918.5,234.9 921.1,236.7 923.8,232.5 925.0,234.0 926.4,230.5 927.4,230.1 928.3,229.1 929.6,225.6 931.1,226.8 932.9,223.3 934.0,222.3 M890.8,235.3 890.9,237.0 892.4,240.3 892.9,240.4 890.6,241.7 891.8,242.5 889.9,246.7 893.0,249.5 893.0,252.5 894.1,252.6 894.2,254.4 892.5,256.4 893.9,259.3 892.2,260.3 895.1,260.9 893.8,263.8 895.8,267.2 894.8,271.1 895.0,271.2 895.5,273.0 894.3,274.3 896.3,278.2 895.0,277.8 896.1,279.3 896.4,283.0 893.4,284.6 894.2,285.9 893.6,288.7 893.0,293.0 895.4,292.6 893.3,295.7 891.3,298.0 889.7,298.5 889.4,300.0 890.0,303.1 889.6,301.8 888.7,304.9 890.0,306.2 888.9,309.1 891.0,309.9 888.5,312.2 891.4,313.1 891.1,316.1 894.3,318.0 892.6,321.3 894.5,322.6 893.9,324.4 894.5,324.3 893.7,326.7 893.9,328.9 896.2,333.6 896.6,335.5 898.4,337.7 896.3,337.0 898.6,338.8 896.8,340.1 M894.3,274.3 896.9,274.0 897.3,276.0 900.8,279.0 900.8,280.9 904.1,280.6 904.9,279.8 906.9,280.4 909.3,282.7 909.7,285.2 913.5,286.2 914.7,285.3 916.8,287.0 919.4,285.0 923.2,283.3 923.5,284.7 923.7,283.3 927.5,284.8 928.8,287.0 929.7,285.4 931.7,286.2 934.0,283.9 935.9,281.8 937.9,281.4 938.8,277.7 938.2,278.4 939.1,274.3 941.5,274.2 944.2,272.9 944.3,269.9 M934.0,222.3 933.0,222.9 933.2,227.2 933.9,227.1 930.9,228.7 931.1,231.7 932.1,234.7 930.7,235.2 932.5,238.0 932.0,242.1 930.6,243.2 931.2,244.4 929.9,244.5 933.3,247.0 932.3,249.1 932.9,251.4 932.0,251.2 929.9,255.7 927.8,254.3 926.2,258.6 925.9,258.5 926.5,260.8 925.9,263.0 922.7,263.5 923.2,266.0 928.4,268.1 928.2,267.2 930.9,267.1 934.8,268.4 934.0,267.9 938.3,267.1 939.8,269.5 939.8,271.7 944.3,272.2 942.9,272.5 947.5,272.6 946.2,273.0 950.4,275.0 949.8,278.3 952.9,281.0 953.6,281.4 954.8,279.3 957.1,279.2 959.4,280.6 960.5,279.0 960.0,279.7 963.7,281.4 966.2,279.6 968.4,280.0 M939.1,274.3 939.0,278.3 938.9,278.2 937.9,280.3 937.9,283.4 937.9,282.4 935.1,287.1 932.2,286.7 933.3,289.1 935.1,291.9 933.4,291.7 930.4,295.6 929.7,296.4 929.6,298.4 928.4,301.8 930.6,304.1 928.8,305.3 926.8,309.3 927.7,311.3 927.0,311.5 930.5,313.0 929.2,313.8 931.7,315.8 932.6,318.8 932.7,321.3 932.9,324.9 932.8,325.8 934.5,327.8 932.5,327.3 935.8,328.7 M862.9,289.0 865.1,292.3 867.7,294.0 868.6,293.1 871.8,292.0 872.6,293.3 875.7,296.2 876.3,297.9 879.7,297.6 881.4,296.5 882.5,297.1 881.8,295.0 884.3,296.4 886.3,295.6 890.3,294.3 891.6,296.9 893.3,295.7 M800.8,214.8 801.5,215.7 803.1,216.0 805.9,216.6 805.8,218.6 809.5,221.1 809.6,222.1 812.1,221.0 814.3,219.9 814.4,221.2 818.5,224.3 817.9,226.6 821.5,226.6 822.7,225.7 823.8,226.3 827.7,228.2 826.8,229.8 831.3,230.1 831.4,230.3 834.2,231.7 836.5,233.5 837.4,234.1 840.9,234.1 841.4,235.3 844.7,237.3 845.5,238.2 848.3,238.7 848.6,239.2 851.7,240.0 851.7,241.8 854.9,244.4 855.0,246.4 M789.8,261.3 789.1,263.9 792.9,266.2 793.4,266.7 795.2,266.1 798.1,266.2 797.7,268.2 802.2,271.0 800.7,272.5 805.0,273.1 804.6,272.9 806.7,272.8 808.8,273.5 809.2,276.2 812.1,277.4 813.4,276.7 814.5,278.0 817.8,278.7 818.9,276.8 821.1,277.3 824.3,280.3 825.5,280.5 828.4,280.0 829.6,280.5 827.8,282.5 830.9,283.1 829.6,285.6 832.0,288.4 831.9,290.5 832.7,289.1 834.9,290.1 837.4,286.3 839.7,288.2 841.5,284.3 842.2,284.4 843.8,283.0 845.3,280.5 848.6,281.2 850.6,278.2 852.9,278.9 852.8,277.1 854.2,276.4 855.1,276.3 856.8,274.6 M808.8,273.5 807.1,275.6 807.6,279.6 807.4,279.8 804.5,281.9 805.2,285.7 806.4,287.4 805.0,288.1 806.0,290.8 804.5,292.1 800.7,292.8 799.5,294.0 797.3,294.0 797.2,295.9 794.6,294.8 792.9,298.1 788.8,295.8 788.2,297.9 787.1,299.3 785.1,299.7 783.3,301.0 779.9,299.2 779.5,303.6 778.8,303.2 777.0,305.9 775.6,307.8 775.1,308.1 774.2,311.8 772.7,311.5 771.5,314.5 770.6,315.9 770.1,317.3 773.2,318.4 773.0,318.5 775.2,320.6 773.6,321.7 776.7,325.3 774.7,327.9 775.9,330.6 776.6,332.9 777.2,333.3 M817.9,294.1 819.2,292.8 819.9,293.0 824.0,294.3 823.8,294.1 826.7,294.0 829.8,296.2 829.4,298.4 834.2,297.5 832.6,299.1 836.3,299.5 834.5,301.7 838.6,304.7 836.9,305.8 841.3,307.8 840.4,309.9 842.5,312.5 841.5,312.5 843.4,314.8 842.4,316.6 842.4,321.4 838.9,320.5 838.1,319.2 837.0,321.5 836.9,320.3 834.0,322.7 829.5,321.7 829.8,324.6 827.8,327.1 828.0,327.1 830.1,329.7 827.9,332.2 828.1,331.4 824.4,330.5 824.8,329.3 821.7,328.0 820.8,327.0 819.5,326.3 816.5,325.4 819.1,322.4 818.8,320.5 817.6,319.9 819.1,318.2 821.5,315.0 821.4,316.2 821.0,312.2 822.8,311.4 819.3,308.4 819.1,306.6 817.5,304.3 817.0,302.1 815.7,302.0 815.5,301.0 818.6,298.9 817.3,295.9 817.1,296.1 817.9,294.1 M767.9,284.9 769.2,283.3 770.5,285.0 774.6,287.7 775.3,287.1 777.9,286.8 779.2,288.1 781.4,283.5 781.2,285.1 782.9,280.7 784.7,281.6 787.4,278.5 790.4,277.2 790.7,276.5 788.8,273.7 789.9,271.9 792.0,272.3 791.6,267.7 792.1,268.1 793.7,266.3 M317.9,338.6 320.4,339.4 323.2,339.6 324.0,339.1 326.2,341.1 327.6,338.0 331.6,337.7 334.5,337.1 335.4,335.9 336.2,337.8 336.1,335.5 339.8,336.6 342.8,337.4 345.9,335.9 348.0,336.1 348.2,332.7 349.9,334.4 350.6,331.6 354.1,331.4 356.9,331.7 359.8,331.2 362.1,331.8 362.2,329.5 M362.0,352.6 362.5,353.4 363.9,348.9 365.6,349.8 367.2,347.4 368.4,345.3 369.9,345.8 370.8,342.4 373.8,343.4 375.4,340.0 378.1,339.7 378.1,338.8 379.8,335.9 380.0,337.6 383.1,333.9 384.5,335.6 387.2,334.3 387.9,334.4 390.5,334.0 391.8,332.9 M391.8,332.9 393.5,333.1 394.2,334.5 397.0,336.3 396.8,337.6 400.3,340.6 399.7,343.4 403.2,344.0 402.4,345.2 405.5,346.7 405.0,347.4 406.2,349.9 403.7,350.7 406.5,354.1 405.7,356.3 408.0,359.8 407.2,359.9 408.5,361.0 409.3,361.3 407.8,365.0 409.2,367.7 406.7,371.4 409.2,371.8 409.7,373.6 411.0,374.0 413.2,374.5 413.3,375.5 416.6,374.3 417.9,376.1 418.6,378.6 422.6,377.2 422.7,376.7 423.9,375.7 426.0,372.7 M402.7,352.1 406.4,352.4 409.3,352.9 413.3,351.3 414.3,351.5 414.7,348.0 415.4,349.3 417.7,346.6 419.4,344.9 421.0,345.3 421.8,345.9 424.2,346.4 426.2,347.8 427.2,349.7 430.2,350.4 430.8,349.7 433.3,349.3 435.1,351.1 436.0,354.3 439.2,356.5 M362.0,352.6 363.0,354.4 364.9,356.0 366.5,356.7 367.9,358.5 370.0,361.4 370.8,362.6 373.6,362.6 373.6,364.0 376.7,364.6 376.3,365.4 379.2,368.4 378.6,370.3 381.3,371.3 380.7,373.0 383.0,373.3 379.8,377.0 379.6,377.8 381.6,379.1 380.8,382.2 379.0,382.3 376.1,384.2 374.4,385.0 372.0,386.5 372.1,388.3 370.1,388.7 369.2,391.8 365.9,390.9 364.0,394.6 362.5,393.3 362.5,393.8 360.5,395.7 359.3,393.4 355.0,394.0 355.8,394.5 352.1,393.3 349.6,392.8 349.8,393.7 344.6,392.7 344.7,389.7 342.4,388.6 342.1,387.3 344.9,385.9 344.4,383.0 342.7,382.1 345.1,380.5 345.9,377.3 347.5,377.7 348.0,374.1 348.9,373.8 351.1,371.9 352.6,369.4 353.0,369.7 354.0,365.6 355.4,366.4 356.2,362.9 357.4,362.2 359.7,360.8 361.1,358.1 360.8,357.9 361.4,355.1 M319.6,393.6 321.7,391.5 325.5,392.7 325.5,392.0 327.9,391.2 332.4,393.9 333.3,394.1 334.9,393.0 337.3,394.7 340.1,393.7 340.2,392.4 340.8,394.7 345.3,396.4 344.2,396.3 348.2,396.2 349.0,397.2 350.9,398.6 350.9,399.6 353.9,401.8 353.9,404.6 355.2,406.3 356.3,409.0 356.0,409.6 356.5,412.4 357.5,413.7 357.6,417.1 357.5,415.4 356.1,416.7 354.8,417.4 352.2,418.6 351.0,421.4 348.3,420.9 350.2,425.5 349.9,426.7 350.0,429.6 354.1,431.2 353.1,431.0 357.2,430.6 357.2,431.4 M349.0,397.2 349.5,397.1 353.5,395.4 356.2,397.0 359.7,395.3 359.9,395.5 361.0,397.7 362.3,395.7 364.6,396.0 366.0,393.7 368.3,392.7 370.2,391.1 372.6,389.2 372.4,388.7 374.1,386.0 374.6,386.5 377.8,383.3 379.6,384.5 383.5,387.0 382.2,388.2 386.4,389.3 384.8,389.9 389.2,389.5 386.2,392.4 384.7,392.3 384.0,393.9 382.2,396.5 384.7,396.4 384.9,398.3 384.3,400.1 386.3,402.6 385.0,405.7 382.9,407.5 382.1,407.6 382.6,409.9 380.9,409.9 378.4,408.5 377.6,408.8 374.6,408.1 372.6,406.5 369.6,410.2 367.9,409.6 366.8,411.9 365.9,413.0 364.9,412.5 362.3,415.8 360.4,413.5 357.6,417.1 M380.9,409.9 383.0,412.9 384.3,413.7 386.8,412.2 387.8,411.3 390.8,413.4 390.9,416.8 394.7,418.3 394.5,417.8 397.7,417.6 399.1,419.0 399.8,420.5 403.9,421.1 402.6,421.6 407.4,423.3 406.9,425.1 409.6,425.4 411.6,425.2 412.3,426.0 415.6,428.2 415.6,430.6 419.1,431.5 419.3,431.0 422.4,430.9 422.6,433.0 425.6,436.1 425.7,436.8 428.9,438.0 428.5,439.3 432.1,440.1 429.7,444.8 428.4,446.5 429.2,447.6 427.5,451.6 428.0,453.3 426.7,454.1 425.7,456.5 423.5,456.5 421.2,459.4 420.9,459.2 419.8,462.2 420.9,465.7 418.7,465.2 416.3,469.8 417.9,471.3 417.2,471.8 416.7,474.7 413.1,474.4 410.4,477.8 408.5,477.2 M389.2,389.5 390.3,390.3 392.2,390.5 392.4,388.4 394.8,390.8 397.2,389.7 399.1,389.8 401.2,389.0 401.9,386.1 405.2,387.9 405.7,384.6 406.7,383.8 408.8,383.2 410.0,379.6 411.9,381.0 414.3,376.9 415.8,378.0 417.9,378.6 417.4,376.0 418.8,378.1 419.1,376.9 422.4,376.4 424.5,375.9 425.5,378.4 424.8,378.0 426.5,379.6 425.2,381.8 428.2,386.0 427.6,389.3 428.8,389.8 427.1,391.4 424.9,394.4 426.6,396.4 426.3,395.6 425.6,399.1 427.2,400.7 425.3,401.6 422.1,403.1 420.9,405.0 418.9,405.8 418.9,408.3 416.0,408.6 414.1,411.4 416.4,413.1 416.2,413.2 418.4,415.3 418.6,418.0 421.1,419.6 421.3,422.3 424.4,423.0 424.3,423.4 427.8,425.7 427.1,427.0 431.0,429.8 429.4,432.2 431.1,433.1 429.3,433.5 429.4,435.7 430.7,438.4 429.7,440.2 432.1,440.1 M439.2,356.5 437.1,355.4 434.4,358.7 433.5,360.3 433.9,360.8 433.8,363.8 432.4,364.9 430.7,365.7 429.6,369.4 428.8,368.4 428.4,371.7 427.4,372.9 425.7,373.4 424.5,375.9 M427.6,389.3 430.8,390.4 431.4,389.5 434.3,388.9 435.0,390.3 437.8,393.3 438.6,395.6 441.1,396.0 441.7,397.3 441.5,400.1 442.8,400.7 442.1,403.3 442.6,404.3 441.1,407.2 443.2,410.2 443.2,410.7 440.2,414.6 439.7,415.7 440.1,417.4 439.7,417.6 442.7,419.4 442.7,421.2 444.8,424.2 443.1,427.3 446.2,429.4 443.9,431.5 444.4,431.8 444.5,435.4 443.6,437.3 445.6,436.7 443.6,441.2 441.8,441.8 444.8,441.6 448.1,440.2 448.8,443.1 449.8,442.9 453.1,442.1 454.5,443.1 456.1,440.2 455.9,440.3 458.8,441.2 462.6,440.5 461.8,441.5 466.7,444.2 466.8,445.5 469.2,444.5 472.7,444.0 472.0,446.3 477.1,449.1 477.2,449.0 479.2,448.9 483.4,450.5 482.3,449.9 485.7,448.5 486.3,449.8 487.4,453.0 489.3,455.6 487.3,457.2 490.7,459.7 488.7,460.1 492.3,459.3 492.4,460.2 495.5,463.1 496.7,466.1 498.3,466.9 501.3,465.6 501.2,464.7 505.3,466.3 504.8,469.7 508.5,472.4 507.7,471.8 505.1,474.2 505.3,476.8 507.0,478.3 505.4,478.1 M444.7,412.0 444.6,408.4 446.1,410.3 447.1,406.8 450.7,406.5 452.7,405.2 456.1,404.0 456.9,403.7 459.4,402.3 460.1,404.1 463.0,401.2 464.1,402.6 466.9,402.3 467.2,399.6 470.3,401.4 470.9,402.3 471.6,402.9 474.3,404.9 476.0,403.7 475.5,405.0 477.8,405.6 480.2,402.9 483.0,403.8 485.9,401.3 488.0,401.2 489.5,398.6 490.5,397.5 489.6,396.3 491.0,393.8 493.2,393.9 494.3,390.7 496.3,388.9 494.1,389.3 M485.9,401.3 484.8,401.5 488.0,404.0 486.8,406.4 490.2,407.9 489.4,410.2 492.5,411.4 492.5,411.5 495.1,413.6 495.8,416.2 497.9,417.9 497.7,419.7 496.0,422.9 496.7,425.1 494.2,425.6 494.3,428.7 496.4,430.8 494.9,430.2 498.5,432.2 496.7,433.7 497.9,437.5 496.5,440.4 498.8,443.3 498.5,444.7 499.2,445.1 502.3,446.6 502.6,447.0 505.7,447.4 506.4,449.0 508.2,451.1 512.1,448.5 513.4,448.4 514.6,447.5 517.7,445.6 520.3,448.3 523.3,447.7 522.6,447.8 523.5,448.7 526.1,446.0 529.0,447.1 532.1,446.5 532.3,444.9 535.2,446.3 M474.2,333.7 473.2,335.7 476.4,337.0 475.9,340.4 477.7,341.7 477.6,343.4 479.0,344.5 478.6,345.2 476.2,349.7 476.5,348.2 475.1,352.7 474.4,351.6 472.4,355.6 470.2,355.3 470.3,358.4 468.7,359.0 M478.6,345.2 480.4,346.6 483.7,345.8 485.7,344.8 488.5,345.5 489.3,344.1 491.6,345.5 492.3,342.4 495.1,342.8 496.0,342.3 498.6,338.9 499.0,340.2 500.1,336.7 500.3,335.6 499.7,334.7 502.9,332.1 504.0,329.9 M499.0,340.2 503.6,341.7 501.9,344.8 506.0,346.3 504.4,348.6 507.9,349.8 506.5,349.8 507.6,352.2 505.4,352.1 507.1,355.5 508.0,359.5 507.7,360.9 509.2,362.7 507.3,363.9 508.8,366.6 507.7,367.9 511.2,370.5 509.4,372.4 513.1,374.8 512.8,376.6 M525.6,329.8 527.0,330.6 527.2,333.4 527.8,335.0 527.4,336.6 529.6,338.6 527.1,339.5 530.5,342.4 529.8,343.9 532.0,347.1 532.1,349.1 534.2,349.4 537.4,347.8 536.4,348.1 540.9,350.0 541.0,350.7 542.7,351.0 546.4,353.1 544.1,354.8 543.3,356.5 541.7,357.0 538.4,359.6 537.2,359.3 535.7,362.3 535.7,362.0 536.1,364.5 M546.4,353.1 547.6,352.5 551.2,350.2 552.7,349.8 554.2,347.2 554.9,346.8 555.9,344.1 556.6,343.1 558.1,341.7 560.1,338.5 560.0,339.0 558.9,334.9 560.5,334.8 564.2,332.7 565.3,329.8 M564.2,312.7 564.1,315.9 563.1,318.4 564.6,321.4 562.3,321.3 563.1,324.5 564.4,327.2 563.2,330.5 565.3,329.8 563.6,331.6 563.2,333.2 563.7,336.6 562.5,337.1 565.5,338.6 564.3,340.5 566.1,344.8 565.3,347.5 564.3,348.6 565.5,349.2 563.8,351.2 566.5,354.2 565.5,355.4 566.8,356.4 566.6,357.9 563.7,359.9 562.0,360.2 560.4,363.4 558.4,362.9 557.9,366.3 555.4,366.4 553.4,368.8 553.6,370.7 553.9,371.1 552.1,374.6 549.8,374.3 548.8,377.3 548.4,378.8 547.3,379.3 546.0,383.2 M566.8,356.4 568.9,359.3 569.1,361.5 573.1,361.9 571.9,361.6 576.6,361.7 575.4,363.0 579.5,365.2 579.5,367.4 581.8,368.8 583.6,369.8 584.0,369.8 587.2,369.2 586.5,370.0 590.1,372.7 589.6,375.8 592.3,377.5 M592.3,341.3 594.1,343.7 593.2,348.5 595.1,350.3 596.0,351.7 596.9,351.8 596.2,353.6 597.8,354.5 600.1,355.2 604.3,353.5 604.5,355.5 604.8,354.6 606.8,354.1 609.5,355.6 M580.0,322.9 581.5,325.2 582.5,326.2 584.8,326.3 584.7,328.3 588.4,329.4 586.6,331.8 590.7,334.5 588.6,335.3 591.5,337.1 590.6,337.6 592.3,338.5 592.3,341.3 594.0,341.9 597.2,339.6 598.3,340.7 599.9,338.0 600.3,338.8 602.6,336.6 604.7,335.5 609.4,336.6 609.7,335.6 612.0,334.7 615.3,336.7 615.3,339.3 618.6,339.2 620.2,338.3 621.0,339.3 624.0,340.5 624.9,340.2 626.2,340.9 628.8,343.8 M608.7,367.5 611.2,369.3 611.7,369.4 614.7,370.0 614.7,372.6 618.3,375.3 617.8,377.3 622.0,379.4 621.1,380.9 624.4,381.2 624.5,383.5 626.6,384.7 626.7,387.8 628.5,389.8 627.6,390.9 628.4,391.4 626.8,393.7 626.5,396.4 628.9,396.3 627.4,397.7 626.1,401.5 626.8,402.3 624.6,403.7 M636.6,342.2 633.9,344.4 633.8,344.1 635.7,349.0 633.8,349.8 632.8,351.4 636.1,352.9 635.0,355.4 638.7,357.1 637.3,357.4 641.4,359.0 639.7,362.0 644.2,364.0 642.1,364.4 641.8,366.5 643.2,370.4 641.4,369.5 643.1,371.5 645.4,369.2 647.8,369.2 650.1,368.5 649.4,366.7 651.5,369.6 655.4,368.7 658.3,369.6 660.8,369.1 661.0,366.3 663.5,367.7 665.6,365.8 667.2,365.6 669.7,364.9 670.9,364.3 671.7,363.0 671.1,361.1 672.9,356.5 670.6,356.8 671.0,355.2 671.0,355.1 668.5,352.9 670.3,351.4 667.7,349.1 668.7,345.6 666.6,344.3 667.1,342.0 663.9,341.0 665.0,340.2 664.0,338.7 663.1,337.8 666.2,334.0 666.6,332.3 665.9,331.5 M663.5,367.7 665.3,369.1 665.2,370.6 667.5,371.9 664.8,374.7 667.7,375.8 666.5,378.5 668.0,379.4 667.7,382.1 670.5,383.7 671.1,386.1 671.1,387.8 672.9,389.5 672.3,391.2 673.3,392.5 671.3,394.9 671.7,397.1 672.9,397.2 672.3,399.4 670.3,402.0 668.9,401.3 668.3,405.2 M572.8,401.0 570.7,402.6 568.5,403.6 568.4,406.3 568.0,408.8 566.6,408.5 567.0,412.6 568.2,413.2 566.8,413.9 566.0,415.6 566.2,418.5 564.3,420.2 567.2,420.9 566.9,422.5 M717.8,329.0 718.0,331.1 718.1,333.8 717.6,335.9 720.6,336.8 719.4,338.4 721.2,342.0 719.7,345.3 718.6,347.2 719.7,347.2 720.5,348.3 723.5,349.7 723.7,350.7 727.7,351.7 726.9,353.0 731.3,354.5 732.7,354.6 734.9,352.3 735.6,353.4 738.6,352.0 741.5,351.0 743.5,353.7 M862.4,327.9 864.5,332.0 862.1,334.9 863.9,338.7 863.7,338.9 866.7,339.7 866.3,340.7 M897.7,331.4 895.8,332.2 898.9,333.7 898.4,337.5 899.7,338.1 899.5,339.2 897.6,340.0 898.8,344.8 896.8,346.9 899.5,348.5 898.9,350.2 899.8,353.7 902.3,352.1 904.4,351.9 904.9,348.7 906.7,350.3 907.5,346.8 910.5,347.3 911.6,347.3 914.4,345.8 915.1,346.7 917.6,345.2 919.3,346.8 919.8,347.7 923.8,347.6 922.6,347.6 927.3,349.0 926.6,351.7 929.8,353.9 931.3,354.0 932.0,352.9 936.0,352.8 934.5,356.3 937.1,358.9 936.7,362.9 940.3,363.9 M899.8,353.7 899.5,356.3 896.6,355.5 897.9,358.5 898.3,360.6 897.3,361.7 899.1,362.0 897.1,366.6 895.3,367.5 896.8,368.7 895.5,372.4 896.2,375.1 897.6,376.1"/></g>
<g font-family="DejaVu Sans, Liberation Sans, sans-serif" font-size="9.5" fill="#5a5a20" fill-opacity="0.4" text-anchor="middle"><text x="339" y="413.3">Bratislava</text><text x="395" y="372.8">Trnava</text><text x="454.5" y="384.3">Nitra</text><text x="449" y="280.3">Trenčín</text><text x="531.5" y="220.8">Žilina</text><text x="617" y="307.8">Slovensko</text><text x="830" y="261.3">Prešov</text><text x="830.5" y="312.3">Košice</text></g>
</svg>
<div class="ctl" style="left:8px;top:9px;width:26px;height:52px;"><div class="abs" style="left:0;top:24px;width:24px;height:1px;background:#ccc"></div><svg class="abs" style="left:0;top:0" width="24" height="50" viewBox="0 0 24 50"><path d="M7,11.2h4v-4h2.4v4h4v2.4h-4v4h-2.4v-4h-4z" fill="#2458a8"/><path d="M7,37h11v1.6h-11z" fill="#2458a8"/></svg></div>
<div class="ctl" style="left:8px;top:71px;width:26px;height:27px;"><svg class="abs" style="left:0;top:0" width="24" height="24" viewBox="0 0 24 24"><path d="M6.5,10.5v-4h4 M13.5,6.5h4v4 M17.5,13.5v4h-4 M10.5,17.5h-4v-4" fill="none" stroke="#444" stroke-width="1.8"/></svg></div>
<div class="ctl" style="left:50px;top:9px;width:75px;height:48px;"><svg class="abs" style="left:0;top:0" width="72" height="45" viewBox="0 0 72 45"><g fill="none" stroke="#1e63c6"><path d="M26,14.5h16 M35,5v15" stroke-width="1.6"/><path d="M31.5,7.5h8" stroke-width="1.2"/><circle cx="32.5" cy="6.6" r="1.2" fill="#1e63c6" stroke="none"/><circle cx="35.6" cy="5.8" r="1.2" fill="#1e63c6" stroke="none"/><circle cx="39" cy="6.6" r="1.2" fill="#1e63c6" stroke="none"/><path d="M42,13l4,-3v8l-4,-3z" fill="#1e63c6" stroke-width="0.8"/><path d="M5,32.8q3.9,-3 7.8,0t7.8,0t7.8,0t7.8,0t7.8,0t7.8,0t7.8,0t7.8,0" stroke-width="1.9"/><path d="M5,36q3.9,-3 7.8,0t7.8,0t7.8,0t7.8,0t7.8,0t7.8,0t7.8,0t7.8,0" stroke-width="1.9"/><path d="M5,39.2q3.9,-3 7.8,0t7.8,0t7.8,0t7.8,0t7.8,0t7.8,0t7.8,0t7.8,0" stroke-width="1.9"/></g><text x="4.500" y="30.300" font-family="Liberation Serif, serif" font-weight="bold" font-size="14.500" fill="#1e63c6" stroke="#1e63c6" stroke-width="0.6" textLength="64.500" lengthAdjust="spacingAndGlyphs">SHMÚ</text></svg></div>
<div class="ctl" style="left:465px;top:372px;width:178px;height:34px;border-radius:4px;font-family:'Liberation Sans',sans-serif;font-size:7.720px;line-height:12.6px;padding:4px 0 0 5px;color:#111;white-space:nowrap;">Aktualizované: 9.7.2025 09:01<br>Najbližšia aktualizácia najneskôr: 9.7.2025 12:00</div>
<div class="ctl" style="left:653px;top:346px;width:129px;height:59px;border-radius:4px;font-family:'DejaVu Sans','Liberation Sans',sans-serif;font-size:7.850px;color:#222;white-space:nowrap;"><div class="abs" style="left:5px;top:5.0px;width:10px;height:10px;background:#3f7a3a;opacity:0.85"></div><div class="abs" style="left:17px;top:3.5px;line-height:13px;">Bez nebezpečných javov</div><div class="abs" style="left:5px;top:17.4px;width:10px;height:10px;background:#ffee00;opacity:0.85"></div><div class="abs" style="left:17px;top:15.9px;line-height:13px;">1. stupeň</div><div class="abs" style="left:5px;top:29.8px;width:10px;height:10px;background:#f28a1e;opacity:0.85"></div><div class="abs" style="left:17px;top:28.3px;line-height:13px;">2. stupeň</div><div class="abs" style="left:5px;top:42.2px;width:10px;height:10px;background:#ee1111;opacity:0.85"></div><div class="abs" style="left:17px;top:40.7px;line-height:13px;">3. stupeň</div></div>
<div class="abs" style="right:0;bottom:0;height:13px;width:201px;background:rgba(255,255,255,0.8);font-size:10.4px;line-height:13px;color:#333;white-space:nowrap;"><svg class="abs" style="left:3.500px;top:2.500px" width="10" height="8" viewBox="0 0 12 8" preserveAspectRatio="none"><rect width="12" height="4" fill="#4c7be1"/><rect y="4" width="12" height="4" fill="#ffd500"/></svg><span class="abs" style="left:16.500px;top:0"><span style="color:#2b6cc4">Leaflet</span> | © OpenStreetmap contributors</span></div>
<div class="ctl" id="ttl">Meteorologické výstrahy - Streda - 9.7.2025</div>
</div>
<div class="abs" style="left:0;width:1020px;top:532px;text-align:center;font-weight:bold;font-size:15.3px;color:#2c5eaa;line-height:18px;">Tabuľkové zobrazenie výstrah</div>
<div class="abs" style="left:1px;top:556px;width:1018px;height:246px;background:#b4b4b4;"></div>
<div class="c" style="left:2px;top:557px;width:187px;height:24px;line-height:26px;background:#edf3fa;text-align:left;padding-left:8px;color:#2458a8;box-sizing:border-box;">Región</div>
<div class="c" style="left:190px;top:557px;width:53px;height:24px;line-height:26px;background:#edf3fa;text-align:left;padding-left:7px;color:#2458a8;box-sizing:border-box;">Jav</div>
<div class="c" style="left:244px;top:557px;width:774px;height:24px;line-height:26px;background:#edf3fa;text-align:left;padding-left:8px;color:#2458a8;box-sizing:border-box;">Stupne v hodinových krokoch</div>
<div class="c" style="left:2px;top:582px;width:43px;height:24px;line-height:26px;background:#edf3fa;color:#2458a8;"><svg class="abs" style="left:7px;top:4px" width="30" height="13" viewBox="0 0 30 13"><path d="M0,5h5v-5h3v5h5v3h-5v5h-3v-5h-5z M16,5h13v3h-13z" fill="#2458a8"/></svg></div>
<div class="c" style="left:46px;top:582px;width:143px;height:24px;line-height:26px;background:#edf3fa;"></div>
<div class="c" style="left:190px;top:582px;width:53px;height:24px;line-height:26px;background:#edf3fa;"></div>
<div class="c" style="left:244px;top:582px;width:31px;height:24px;line-height:26px;background:#edf3fa;color:#2458a8;">0</div>
<div class="c" style="left:276px;top:582px;width:32px;height:24px;line-height:26px;background:#edf3fa;color:#2458a8;">1</div>
<div class="c" style="left:309px;top:582px;width:31px;height:24px;line-height:26px;background:#edf3fa;color:#2458a8;">2</div>
<div class="c" style="left:341px;top:582px;width:31px;height:24px;line-height:26px;background:#edf3fa;color:#2458a8;">3</div>
<div class="c" style="left:373px;top:582px;width:32px;height:24px;line-height:26px;background:#edf3fa;color:#2458a8;">4</div>
<div class="c" style="left:406px;top:582px;width:31px;height:24px;line-height:26px;background:#edf3fa;color:#2458a8;">5</div>
<div class="c" style="left:438px;top:582px;width:31px;height:24px;line-height:26px;background:#edf3fa;color:#2458a8;">6</div>
<div class="c" style="left:470px;top:582px;width:32px;height:24px;line-height:26px;background:#edf3fa;color:#2458a8;">7</div>
<div class="c" style="left:503px;top:582px;width:31px;height:24px;line-height:26px;background:#edf3fa;color:#2458a8;">8</div>
<div class="c" style="left:535px;top:582px;width:31px;height:24px;line-height:26px;background:#edf3fa;color:#2458a8;">9</div>
<div class="c" style="left:567px;top:582px;width:31px;height:24px;line-height:26px;background:#edf3fa;color:#2458a8;">10</div>
<div class="c" style="left:599px;top:582px;width:32px;height:24px;line-height:26px;background:#edf3fa;color:#2458a8;">11</div>
<div class="c" style="left:632px;top:582px;width:31px;height:24px;line-height:26px;background:#edf3fa;color:#2458a8;">12</div>
<div class="c" style="left:664px;top:582px;width:31px;height:24px;line-height:26px;background:#edf3fa;color:#2458a8;">13</div>
<div class="c" style="left:696px;top:582px;width:32px;height:24px;line-height:26px;background:#edf3fa;color:#2458a8;">14</div>
<div class="c" style="left:729px;top:582px;width:31px;height:24px;line-height:26px;background:#edf3fa;color:#2458a8;">15</div>
<div class="c" style="left:761px;top:582px;width:31px;height:24px;line-height:26px;background:#edf3fa;color:#2458a8;">16</div>
<div class="c" style="left:793px;top:582px;width:31px;height:24px;line-height:26px;background:#edf3fa;color:#2458a8;">17</div>
<div class="c" style="left:825px;top:582px;width:32px;height:24px;line-height:26px;background:#edf3fa;color:#2458a8;">18</div>
<div class="c" style="left:858px;top:582px;width:31px;height:24px;line-height:26px;background:#edf3fa;color:#2458a8;">19</div>
<div class="c" style="left:890px;top:582px;width:31px;height:24px;line-height:26px;background:#edf3fa;color:#2458a8;">20</div>
<div class="c" style="left:922px;top:582px;width:32px;height:24px;line-height:26px;background:#edf3fa;color:#2458a8;">21</div>
<div class="c" style="left:955px;top:582px;width:31px;height:24px;line-height:26px;background:#edf3fa;color:#2458a8;">22</div>
<div class="c" style="left:987px;top:582px;width:31px;height:24px;line-height:26px;background:#edf3fa;color:#2458a8;">23</div>
<div class="c" style="left:2px;top:607px;width:43px;height:23px;line-height:25px;background:#fff;color:#2458a8;"><svg class="abs" style="left:15px;top:3px" width="13" height="13" viewBox="0 0 13 13"><path d="M0,5h5v-5h3v5h5v3h-5v5h-3v-5h-5z" fill="#2458a8"/></svg></div>
<div class="c" style="left:46px;top:607px;width:143px;height:23px;line-height:25px;background:#fff;text-align:left;padding-left:6px;box-sizing:border-box;">Bratislavský kraj</div>
<div class="c" style="left:190px;top:607px;width:53px;height:23px;line-height:25px;background:#fff;"><svg class="abs" style="left:29px;top:1px" width="20" height="20" viewBox="0 0 20 20"><rect x="0.500" y="0.500" width="19" height="19" fill="#ffed00" stroke="#111" stroke-width="1"/><g stroke="#857d00" stroke-width="1.150" fill="none"><path d="M4,6.500l8,4.500 M5.200,5l8,4.500 M6.500,3.600l7,4"/><path d="M5.500,4.500l-1.300,2.300 M8,5l-1.800,3 M10.500,6.500l-1.800,3 M13,8l-1.500,2.600" stroke-width="0.7"/></g><path d="M12,10.500l2.500,1.500" stroke="#5a5500" stroke-width="1"/><path d="M11.500,14.800h5.500l-1.800,-4.600z" fill="#3a3600"/></svg></div>
<div class="c" style="left:244px;top:607px;width:31px;height:23px;line-height:25px;background:#e4e3e2;color:#111;"></div>
<div class="c" style="left:276px;top:607px;width:32px;height:23px;line-height:25px;background:#e4e3e2;color:#111;"></div>
<div class="c" style="left:309px;top:607px;width:31px;height:23px;line-height:25px;background:#e4e3e2;color:#111;"></div>
<div class="c" style="left:341px;top:607px;width:31px;height:23px;line-height:25px;background:#e4e3e2;color:#111;"></div>
<div class="c" style="left:373px;top:607px;width:32px;height:23px;line-height:25px;background:#e4e3e2;color:#111;"></div>
<div class="c" style="left:406px;top:607px;width:31px;height:23px;line-height:25px;background:#e4e3e2;color:#111;"></div>
<div class="c" style="left:438px;top:607px;width:31px;height:23px;line-height:25px;background:#e4e3e2;color:#111;"></div>
<div class="c" style="left:470px;top:607px;width:32px;height:23px;line-height:25px;background:#e4e3e2;color:#111;"></div>
<div class="c" style="left:503px;top:607px;width:31px;height:23px;line-height:25px;background:#e4e3e2;color:#111;"></div>
<div class="c" style="left:535px;top:607px;width:31px;height:23px;line-height:25px;background:#ffed00;color:#111;">1</div>
<div class="c" style="left:567px;top:607px;width:31px;height:23px;line-height:25px;background:#ffed00;color:#111;">1</div>
<div class="c" style="left:599px;top:607px;width:32px;height:23px;line-height:25px;background:#ffed00;color:#111;">1</div>
<div class="c" style="left:632px;top:607px;width:31px;height:23px;line-height:25px;background:#ffed00;color:#111;">1</div>
<div class="c" style="left:664px;top:607px;width:31px;height:23px;line-height:25px;background:#ffed00;color:#111;">1</div>
<div class="c" style="left:696px;top:607px;width:32px;height:23px;line-height:25px;background:#ffed00;color:#111;">1</div>
<div class="c" style="left:729px;top:607px;width:31px;height:23px;line-height:25px;background:#ffed00;color:#111;">1</div>
<div class="c" style="left:761px;top:607px;width:31px;height:23px;line-height:25px;background:#ffed00;color:#111;">1</div>
<div class="c" style="left:793px;top:607px;width:31px;height:23px;line-height:25px;background:#2d8540;color:#111;"></div>
<div class="c" style="left:825px;top:607px;width:32px;height:23px;line-height:25px;background:#2d8540;color:#111;"></div>
<div class="c" style="left:858px;top:607px;width:31px;height:23px;line-height:25px;background:#2d8540;color:#111;"></div>
<div class="c" style="left:890px;top:607px;width:31px;height:23px;line-height:25px;background:#2d8540;color:#111;"></div>
<div class="c" style="left:922px;top:607px;width:32px;height:23px;line-height:25px;background:#2d8540;color:#111;"></div>
<div class="c" style="left:955px;top:607px;width:31px;height:23px;line-height:25px;background:#2d8540;color:#111;"></div>
<div class="c" style="left:987px;top:607px;width:31px;height:23px;line-height:25px;background:#2d8540;color:#111;"></div>
<div class="c" style="left:2px;top:631px;width:43px;height:23px;line-height:25px;background:#fff;color:#2458a8;"><svg class="abs" style="left:15px;top:3px" width="13" height="13" viewBox="0 0 13 13"><path d="M0,5h5v-5h3v5h5v3h-5v5h-3v-5h-5z" fill="#2458a8"/></svg></div>
<div class="c" style="left:46px;top:631px;width:143px;height:23px;line-height:25px;background:#fff;text-align:left;padding-left:6px;box-sizing:border-box;">Banskobystrický kraj</div>
<div class="c" style="left:190px;top:631px;width:53px;height:23px;line-height:25px;background:#fff;"><svg class="abs" style="left:7px;top:1px" width="20" height="20" viewBox="0 0 20 20"><rect x="0.500" y="0.500" width="19" height="19" fill="#ffed00" stroke="#111" stroke-width="1"/><path d="M2,18l5,-10l2,4l1.500,-2.500l7.500,8.500z" fill="#8a8400"/><path d="M7,8l2,4l1.500,-2.500l7.500,8.500h-6z" fill="#b5ae00"/><g stroke="#8a8200" stroke-width="0.8" fill="none"><path d="M8.500,3.500l4,2.500 M7.800,5l4,2.500 M9.500,2.500l3.500,2.200"/></g><path d="M12.800,8.300h2.600l-0.900,-2.300z" fill="#4a4500"/></svg><svg class="abs" style="left:29px;top:1px" width="20" height="20" viewBox="0 0 20 20"><rect x="0.500" y="0.500" width="19" height="19" fill="#ffed00" stroke="#111" stroke-width="1"/><path d="M10.9,3.999999999999999q-2.600,2.800 -2.300,4.600a1.450,1.450 0 0 0 2.900,-0.200q0,-2 -0.600,-4.400z" fill="#1a1200"/><path d="M5.800000000000001,9.600000000000001q-2.600,2.800 -2.300,4.600a1.450,1.450 0 0 0 2.900,-0.200q0,-2 -0.600,-4.400z" fill="#1a1200"/><path d="M14.1,9.7q-2.600,2.800 -2.300,4.600a1.450,1.450 0 0 0 2.900,-0.200q0,-2 -0.600,-4.400z" fill="#1a1200"/></svg></div>
<div class="c" style="left:244px;top:631px;width:31px;height:23px;line-height:25px;background:#e4e3e2;color:#111;"></div>
<div class="c" style="left:276px;top:631px;width:32px;height:23px;line-height:25px;background:#e4e3e2;color:#111;"></div>
<div class="c" style="left:309px;top:631px;width:31px;height:23px;line-height:25px;background:#e4e3e2;color:#111;"></div>
<div class="c" style="left:341px;top:631px;width:31px;height:23px;line-height:25px;background:#e4e3e2;color:#111;"></div>
<div class="c" style="left:373px;top:631px;width:32px;height:23px;line-height:25px;background:#e4e3e2;color:#111;"></div>
<div class="c" style="left:406px;top:631px;width:31px;height:23px;line-height:25px;background:#e4e3e2;color:#111;"></div>
<div class="c" style="left:438px;top:631px;width:31px;height:23px;line-height:25px;background:#e4e3e2;color:#111;"></div>
<div class="c" style="left:470px;top:631px;width:32px;height:23px;line-height:25px;background:#e4e3e2;color:#111;"></div>
<div class="c" style="left:503px;top:631px;width:31px;height:23px;line-height:25px;background:#e4e3e2;color:#111;"></div>
<div class="c" style="left:535px;top:631px;width:31px;height:23px;line-height:25px;background:#ffed00;color:#111;">1</div>
<div class="c" style="left:567px;top:631px;width:31px;height:23px;line-height:25px;background:#ffed00;color:#111;">1</div>
<div class="c" style="left:599px;top:631px;width:32px;height:23px;line-height:25px;background:#ffed00;color:#111;">1</div>
<div class="c" style="left:632px;top:631px;width:31px;height:23px;line-height:25px;background:#ffed00;color:#111;">1</div>
<div class="c" style="left:664px;top:631px;width:31px;height:23px;line-height:25px;background:#ffed00;color:#111;">1</div>
<div class="c" style="left:696px;top:631px;width:32px;height:23px;line-height:25px;background:#ffed00;color:#111;">1</div>
<div class="c" style="left:729px;top:631px;width:31px;height:23px;line-height:25px;background:#ffed00;color:#111;">1</div>
<div class="c" style="left:761px;top:631px;width:31px;height:23px;line-height:25px;background:#ffed00;color:#111;">1</div>
<div class="c" style="left:793px;top:631px;width:31px;height:23px;line-height:25px;background:#ffed00;color:#111;">1</div>
<div class="c" style="left:825px;top:631px;width:32px;height:23px;line-height:25px;background:#ffed00;color:#111;">1</div>
<div class="c" style="left:858px;top:631px;width:31px;height:23px;line-height:25px;background:#ffed00;color:#111;">1</div>
<div class="c" style="left:890px;top:631px;width:31px;height:23px;line-height:25px;background:#ffed00;color:#111;">1</div>
<div class="c" style="left:922px;top:631px;width:32px;height:23px;line-height:25px;background:#ffed00;color:#111;">1</div>
<div class="c" style="left:955px;top:631px;width:31px;height:23px;line-height:25px;background:#ffed00;color:#111;">1</div>
<div class="c" style="left:987px;top:631px;width:31px;height:23px;line-height:25px;background:#ffed00;color:#111;">1</div>
<div class="c" style="left:2px;top:655px;width:43px;height:24px;line-height:26px;background:#fff;color:#2458a8;"><svg class="abs" style="left:15px;top:3px" width="13" height="13" viewBox="0 0 13 13"><path d="M0,5h5v-5h3v5h5v3h-5v5h-3v-5h-5z" fill="#2458a8"/></svg></div>
<div class="c" style="left:46px;top:655px;width:143px;height:24px;line-height:26px;background:#fff;text-align:left;padding-left:6px;box-sizing:border-box;">Trenčiansky kraj</div>
<div class="c" style="left:190px;top:655px;width:53px;height:24px;line-height:26px;background:#fff;"><svg class="abs" style="left:7px;top:1px" width="20" height="20" viewBox="0 0 20 20"><rect x="0.500" y="0.500" width="19" height="19" fill="#f08a3c" stroke="#111" stroke-width="1"/><path d="M10.9,3.999999999999999q-2.600,2.800 -2.300,4.600a1.450,1.450 0 0 0 2.900,-0.200q0,-2 -0.600,-4.400z" fill="#1a1200"/><path d="M5.800000000000001,9.600000000000001q-2.600,2.800 -2.300,4.600a1.450,1.450 0 0 0 2.900,-0.200q0,-2 -0.600,-4.400z" fill="#1a1200"/><path d="M14.1,9.7q-2.600,2.800 -2.300,4.600a1.450,1.450 0 0 0 2.900,-0.200q0,-2 -0.600,-4.400z" fill="#1a1200"/></svg><svg class="abs" style="left:29px;top:1px" width="20" height="20" viewBox="0 0 20 20"><rect x="0.500" y="0.500" width="19" height="19" fill="#ffed00" stroke="#111" stroke-width="1"/><g stroke="#857d00" stroke-width="1.150" fill="none"><path d="M4,6.500l8,4.500 M5.200,5l8,4.500 M6.500,3.600l7,4"/><path d="M5.500,4.500l-1.300,2.300 M8,5l-1.800,3 M10.500,6.500l-1.800,3 M13,8l-1.500,2.600" stroke-width="0.7"/></g><path d="M12,10.500l2.500,1.500" stroke="#5a5500" stroke-width="1"/><path d="M11.500,14.800h5.500l-1.800,-4.600z" fill="#3a3600"/></svg></div>
<div class="c" style="left:244px;top:655px;width:31px;height:24px;line-height:26px;background:#e4e3e2;color:#111;"></div>
<div class="c" style="left:276px;top:655px;width:32px;height:24px;line-height:26px;background:#e4e3e2;color:#111;"></div>
<div class="c" style="left:309px;top:655px;width:31px;height:24px;line-height:26px;background:#e4e3e2;color:#111;"></div>
<div class="c" style="left:341px;top:655px;width:31px;height:24px;line-height:26px;background:#e4e3e2;color:#111;"></div>
<div class="c" style="left:373px;top:655px;width:32px;height:24px;line-height:26px;background:#e4e3e2;color:#111;"></div>
<div class="c" style="left:406px;top:655px;width:31px;height:24px;line-height:26px;background:#e4e3e2;color:#111;"></div>
<div class="c" style="left:438px;top:655px;width:31px;height:24px;line-height:26px;background:#e4e3e2;color:#111;"></div>
<div class="c" style="left:470px;top:655px;width:32px;height:24px;line-height:26px;background:#e4e3e2;color:#111;"></div>
<div class="c" style="left:503px;top:655px;width:31px;height:24px;line-height:26px;background:#e4e3e2;color:#111;"></div>
<div class="c" style="left:535px;top:655px;width:31px;height:24px;line-height:26px;background:#fdb515;color:#222;font-weight:normal;">2</div>
<div class="c" style="left:567px;top:655px;width:31px;height:24px;line-height:26px;background:#fdb515;color:#222;font-weight:normal;">2</div>
<div class="c" style="left:599px;top:655px;width:32px;height:24px;line-height:26px;background:#fdb515;color:#222;font-weight:normal;">2</div>
<div class="c" style="left:632px;top:655px;width:31px;height:24px;line-height:26px;background:#fdb515;color:#222;font-weight:normal;">2</div>
<div class="c" style="left:664px;top:655px;width:31px;height:24px;line-height:26px;background:#fdb515;color:#222;font-weight:normal;">2</div>
<div class="c" style="left:696px;top:655px;width:32px;height:24px;line-height:26px;background:#fdb515;color:#222;font-weight:normal;">2</div>
<div class="c" style="left:729px;top:655px;width:31px;height:24px;line-height:26px;background:#fdb515;color:#222;font-weight:normal;">2</div>
<div class="c" style="left:761px;top:655px;width:31px;height:24px;line-height:26px;background:#fdb515;color:#222;font-weight:normal;">2</div>
<div class="c" style="left:793px;top:655px;width:31px;height:24px;line-height:26px;background:#fdb515;color:#222;font-weight:normal;">2</div>
<div class="c" style="left:825px;top:655px;width:32px;height:24px;line-height:26px;background:#fdb515;color:#222;font-weight:normal;">2</div>
<div class="c" style="left:858px;top:655px;width:31px;height:24px;line-height:26px;background:#fdb515;color:#222;font-weight:normal;">2</div>
<div class="c" style="left:890px;top:655px;width:31px;height:24px;line-height:26px;background:#fdb515;color:#222;font-weight:normal;">2</div>
<div class="c" style="left:922px;top:655px;width:32px;height:24px;line-height:26px;background:#fdb515;color:#222;font-weight:normal;">2</div>
<div class="c" style="left:955px;top:655px;width:31px;height:24px;line-height:26px;background:#fdb515;color:#222;font-weight:normal;">2</div>
<div class="c" style="left:987px;top:655px;width:31px;height:24px;line-height:26px;background:#fdb515;color:#222;font-weight:normal;">2</div>
<div class="c" style="left:2px;top:680px;width:43px;height:23px;line-height:25px;background:#fff;color:#2458a8;"><svg class="abs" style="left:15px;top:3px" width="13" height="13" viewBox="0 0 13 13"><path d="M0,5h5v-5h3v5h5v3h-5v5h-3v-5h-5z" fill="#2458a8"/></svg></div>
<div class="c" style="left:46px;top:680px;width:143px;height:23px;line-height:25px;background:#fff;text-align:left;padding-left:6px;box-sizing:border-box;">Košický kraj</div>
<div class="c" style="left:190px;top:680px;width:53px;height:23px;line-height:25px;background:#fff;"></div>
<div class="c" style="left:244px;top:680px;width:31px;height:23px;line-height:25px;background:#e4e3e2;color:#111;"></div>
<div class="c" style="left:276px;top:680px;width:32px;height:23px;line-height:25px;background:#e4e3e2;color:#111;"></div>
<div class="c" style="left:309px;top:680px;width:31px;height:23px;line-height:25px;background:#e4e3e2;color:#111;"></div>
<div class="c" style="left:341px;top:680px;width:31px;height:23px;line-height:25px;background:#e4e3e2;color:#111;"></div>
<div class="c" style="left:373px;top:680px;width:32px;height:23px;line-height:25px;background:#e4e3e2;color:#111;"></div>
<div class="c" style="left:406px;top:680px;width:31px;height:23px;line-height:25px;background:#e4e3e2;color:#111;"></div>
<div class="c" style="left:438px;top:680px;width:31px;height:23px;line-height:25px;background:#e4e3e2;color:#111;"></div>
<div class="c" style="left:470px;top:680px;width:32px;height:23px;line-height:25px;background:#e4e3e2;color:#111;"></div>
<div class="c" style="left:503px;top:680px;width:31px;height:23px;line-height:25px;background:#e4e3e2;color:#111;"></div>
<div class="c" style="left:535px;top:680px;width:31px;height:23px;line-height:25px;background:#2d8540;color:#111;"></div>
<div class="c" style="left:567px;top:680px;width:31px;height:23px;line-height:25px;background:#2d8540;color:#111;"></div>
<div class="c" style="left:599px;top:680px;width:32px;height:23px;line-height:25px;background:#2d8540;color:#111;"></div>
<div class="c" style="left:632px;top:680px;width:31px;height:23px;line-height:25px;background:#2d8540;color:#111;"></div>
<div class="c" style="left:664px;top:680px;width:31px;height:23px;line-height:25px;background:#2d8540;color:#111;"></div>
<div class="c" style="left:696px;top:680px;width:32px;height:23px;line-height:25px;background:#2d8540;color:#111;"></div>
<div class="c" style="left:729px;top:680px;width:31px;height:23px;line-height:25px;background:#2d8540;color:#111;"></div>
<div class="c" style="left:761px;top:680px;width:31px;height:23px;line-height:25px;background:#2d8540;color:#111;"></div>
<div class="c" style="left:793px;top:680px;width:31px;height:23px;line-height:25px;background:#2d8540;color:#111;"></div>
<div class="c" style="left:825px;top:680px;width:32px;height:23px;line-height:25px;background:#2d8540;color:#111;"></div>
<div class="c" style="left:858px;top:680px;width:31px;height:23px;line-height:25px;background:#2d8540;color:#111;"></div>
<div class="c" style="left:890px;top:680px;width:31px;height:23px;line-height:25px;background:#2d8540;color:#111;"></div>
<div class="c" style="left:922px;top:680px;width:32px;height:23px;line-height:25px;background:#2d8540;color:#111;"></div>
<div class="c" style="left:955px;top:680px;width:31px;height:23px;line-height:25px;background:#2d8540;color:#111;"></div>
<div class="c" style="left:987px;top:680px;width:31px;height:23px;line-height:25px;background:#2d8540;color:#111;"></div>
<div class="c" style="left:2px;top:704px;width:43px;height:24px;line-height:26px;background:#fff;color:#2458a8;"><svg class="abs" style="left:15px;top:3px" width="13" height="13" viewBox="0 0 13 13"><path d="M0,5h5v-5h3v5h5v3h-5v5h-3v-5h-5z" fill="#2458a8"/></svg></div>
<div class="c" style="left:46px;top:704px;width:143px;height:24px;line-height:26px;background:#fff;text-align:left;padding-left:6px;box-sizing:border-box;">Nitriansky kraj</div>
<div class="c" style="left:190px;top:704px;width:53px;height:24px;line-height:26px;background:#fff;"><svg class="abs" style="left:29px;top:1px" width="20" height="20" viewBox="0 0 20 20"><rect x="0.500" y="0.500" width="19" height="19" fill="#ffed00" stroke="#111" stroke-width="1"/><g stroke="#857d00" stroke-width="1.150" fill="none"><path d="M4,6.500l8,4.500 M5.200,5l8,4.500 M6.500,3.600l7,4"/><path d="M5.500,4.500l-1.300,2.300 M8,5l-1.800,3 M10.500,6.500l-1.800,3 M13,8l-1.500,2.600" stroke-width="0.7"/></g><path d="M12,10.500l2.500,1.500" stroke="#5a5500" stroke-width="1"/><path d="M11.500,14.800h5.500l-1.800,-4.600z" fill="#3a3600"/></svg></div>
<div class="c" style="left:244px;top:704px;width:31px;height:24px;line-height:26px;background:#e4e3e2;color:#111;"></div>
<div class="c" style="left:276px;top:704px;width:32px;height:24px;line-height:26px;background:#e4e3e2;color:#111;"></div>
<div class="c" style="left:309px;top:704px;width:31px;height:24px;line-height:26px;background:#e4e3e2;color:#111;"></div>
<div class="c" style="left:341px;top:704px;width:31px;height:24px;line-height:26px;background:#e4e3e2;color:#111;"></div>
<div class="c" style="left:373px;top:704px;width:32px;height:24px;line-height:26px;background:#e4e3e2;color:#111;"></div>
<div class="c" style="left:406px;top:704px;width:31px;height:24px;line-height:26px;background:#e4e3e2;color:#111;"></div>
<div class="c" style="left:438px;top:704px;width:31px;height:24px;line-height:26px;background:#e4e3e2;color:#111;"></div>
<div class="c" style="left:470px;top:704px;width:32px;height:24px;line-height:26px;background:#e4e3e2;color:#111;"></div>
<div class="c" style="left:503px;top:704px;width:31px;height:24px;line-height:26px;background:#e4e3e2;color:#111;"></div>
<div class="c" style="left:535px;top:704px;width:31px;height:24px;line-height:26px;background:#ffed00;color:#111;">1</div>
<div class="c" style="left:567px;top:704px;width:31px;height:24px;line-height:26px;background:#ffed00;color:#111;">1</div>
<div class="c" style="left:599px;top:704px;width:32px;height:24px;line-height:26px;background:#ffed00;color:#111;">1</div>
<div class="c" style="left:632px;top:704px;width:31px;height:24px;line-height:26px;background:#ffed00;color:#111;">1</div>
<div class="c" style="left:664px;top:704px;width:31px;height:24px;line-height:26px;background:#ffed00;color:#111;">1</div>
<div class="c" style="left:696px;top:704px;width:32px;height:24px;line-height:26px;background:#ffed00;color:#111;">1</div>
<div class="c" style="left:729px;top:704px;width:31px;height:24px;line-height:26px;background:#ffed00;color:#111;">1</div>
<div class="c" style="left:761px;top:704px;width:31px;height:24px;line-height:26px;background:#ffed00;color:#111;">1</div>
<div class="c" style="left:793px;top:704px;width:31px;height:24px;line-height:26px;background:#ffed00;color:#111;">1</div>
<div class="c" style="left:825px;top:704px;width:32px;height:24px;line-height:26px;background:#ffed00;color:#111;">1</div>
<div class="c" style="left:858px;top:704px;width:31px;height:24px;line-height:26px;background:#ffed00;color:#111;">1</div>
<div class="c" style="left:890px;top:704px;width:31px;height:24px;line-height:26px;background:#2d8540;color:#111;"></div>
<div class="c" style="left:922px;top:704px;width:32px;height:24px;line-height:26px;background:#2d8540;color:#111;"></div>
<div class="c" style="left:955px;top:704px;width:31px;height:24px;line-height:26px;background:#2d8540;color:#111;"></div>
<div class="c" style="left:987px;top:704px;width:31px;height:24px;line-height:26px;background:#2d8540;color:#111;"></div>
<div class="c" style="left:2px;top:729px;width:43px;height:23px;line-height:25px;background:#fff;color:#2458a8;"><svg class="abs" style="left:15px;top:3px" width="13" height="13" viewBox="0 0 13 13"><path d="M0,5h5v-5h3v5h5v3h-5v5h-3v-5h-5z" fill="#2458a8"/></svg></div>
<div class="c" style="left:46px;top:729px;width:143px;height:23px;line-height:25px;background:#fff;text-align:left;padding-left:6px;box-sizing:border-box;">Trnavský kraj</div>
<div class="c" style="left:190px;top:729px;width:53px;height:23px;line-height:25px;background:#fff;"><svg class="abs" style="left:7px;top:1px" width="20" height="20" viewBox="0 0 20 20"><rect x="0.500" y="0.500" width="19" height="19" fill="#ffed00" stroke="#111" stroke-width="1"/><g stroke="#857d00" stroke-width="1.150" fill="none"><path d="M4,6.500l8,4.500 M5.200,5l8,4.500 M6.500,3.600l7,4"/><path d="M5.500,4.500l-1.300,2.300 M8,5l-1.800,3 M10.500,6.500l-1.800,3 M13,8l-1.500,2.600" stroke-width="0.7"/></g><path d="M12,10.500l2.500,1.500" stroke="#5a5500" stroke-width="1"/><path d="M11.500,14.800h5.500l-1.800,-4.600z" fill="#3a3600"/></svg><svg class="abs" style="left:29px;top:1px" width="20" height="20" viewBox="0 0 20 20"><rect x="0.500" y="0.500" width="19" height="19" fill="#ffed00" stroke="#111" stroke-width="1"/><path d="M10.9,3.999999999999999q-2.600,2.800 -2.300,4.600a1.450,1.450 0 0 0 2.900,-0.200q0,-2 -0.600,-4.400z" fill="#1a1200"/><path d="M5.800000000000001,9.600000000000001q-2.600,2.800 -2.300,4.600a1.450,1.450 0 0 0 2.900,-0.200q0,-2 -0.600,-4.400z" fill="#1a1200"/><path d="M14.1,9.7q-2.600,2.800 -2.300,4.600a1.450,1.450 0 0 0 2.900,-0.200q0,-2 -0.600,-4.400z" fill="#1a1200"/></svg></div>
<div class="c" style="left:244px;top:729px;width:31px;height:23px;line-height:25px;background:#e4e3e2;color:#111;"></div>
<div class="c" style="left:276px;top:729px;width:32px;height:23px;line-height:25px;background:#e4e3e2;color:#111;"></div>
<div class="c" style="left:309px;top:729px;width:31px;height:23px;line-height:25px;background:#e4e3e2;color:#111;"></div>
<div class="c" style="left:341px;top:729px;width:31px;height:23px;line-height:25px;background:#e4e3e2;color:#111;"></div>
<div class="c" style="left:373px;top:729px;width:32px;height:23px;line-height:25px;background:#e4e3e2;color:#111;"></div>
<div class="c" style="left:406px;top:729px;width:31px;height:23px;line-height:25px;background:#e4e3e2;color:#111;"></div>
<div class="c" style="left:438px;top:729px;width:31px;height:23px;line-height:25px;background:#e4e3e2;color:#111;"></div>
<div class="c" style="left:470px;top:729px;width:32px;height:23px;line-height:25px;background:#e4e3e2;color:#111;"></div>
<div class="c" style="left:503px;top:729px;width:31px;height:23px;line-height:25px;background:#e4e3e2;color:#111;"></div>
<div class="c" style="left:535px;top:729px;width:31px;height:23px;line-height:25px;background:#ffed00;color:#111;">1</div>
<div class="c" style="left:567px;top:729px;width:31px;height:23px;line-height:25px;background:#ffed00;color:#111;">1</div>
<div class="c" style="left:599px;top:729px;width:32px;height:23px;line-height:25px;background:#ffed00;color:#111;">1</div>
<div class="c" style="left:632px;top:729px;width:31px;height:23px;line-height:25px;background:#ffed00;color:#111;">1</div>
<div class="c" style="left:664px;top:729px;width:31px;height:23px;line-height:25px;background:#ffed00;color:#111;">1</div>
<div class="c" style="left:696px;top:729px;width:32px;height:23px;line-height:25px;background:#ffed00;color:#111;">1</div>
<div class="c" style="left:729px;top:729px;width:31px;height:23px;line-height:25px;background:#ffed00;color:#111;">1</div>
<div class="c" style="left:761px;top:729px;width:31px;height:23px;line-height:25px;background:#ffed00;color:#111;">1</div>
<div class="c" style="left:793px;top:729px;width:31px;height:23px;line-height:25px;background:#ffed00;color:#111;">1</div>
<div class="c" style="left:825px;top:729px;width:32px;height:23px;line-height:25px;background:#ffed00;color:#111;">1</div>
<div class="c" style="left:858px;top:729px;width:31px;height:23px;line-height:25px;background:#ffed00;color:#111;">1</div>
<div class="c" style="left:890px;top:729px;width:31px;height:23px;line-height:25px;background:#ffed00;color:#111;">1</div>
<div class="c" style="left:922px;top:729px;width:32px;height:23px;line-height:25px;background:#ffed00;color:#111;">1</div>
<div class="c" style="left:955px;top:729px;width:31px;height:23px;line-height:25px;background:#ffed00;color:#111;">1</div>
<div class="c" style="left:987px;top:729px;width:31px;height:23px;line-height:25px;background:#ffed00;color:#111;">1</div>
<div class="c" style="left:2px;top:753px;width:43px;height:24px;line-height:26px;background:#fff;color:#2458a8;"><svg class="abs" style="left:15px;top:3px" width="13" height="13" viewBox="0 0 13 13"><path d="M0,5h5v-5h3v5h5v3h-5v5h-3v-5h-5z" fill="#2458a8"/></svg></div>
<div class="c" style="left:46px;top:753px;width:143px;height:24px;line-height:26px;background:#fff;text-align:left;padding-left:6px;box-sizing:border-box;">Prešovský kraj</div>
<div class="c" style="left:190px;top:753px;width:53px;height:24px;line-height:26px;background:#fff;"><svg class="abs" style="left:7px;top:1px" width="20" height="20" viewBox="0 0 20 20"><rect x="0.500" y="0.500" width="19" height="19" fill="#ee1c1c" stroke="#111" stroke-width="1"/><path d="M10.9,3.999999999999999q-2.600,2.800 -2.300,4.600a1.450,1.450 0 0 0 2.900,-0.200q0,-2 -0.600,-4.400z" fill="#1a1200"/><path d="M5.800000000000001,9.600000000000001q-2.600,2.800 -2.300,4.600a1.450,1.450 0 0 0 2.900,-0.200q0,-2 -0.600,-4.400z" fill="#1a1200"/><path d="M14.1,9.7q-2.600,2.800 -2.300,4.600a1.450,1.450 0 0 0 2.900,-0.200q0,-2 -0.600,-4.400z" fill="#1a1200"/></svg><svg class="abs" style="left:29px;top:1px" width="20" height="20" viewBox="0 0 20 20"><rect x="0.500" y="0.500" width="19" height="19" fill="#ffed00" stroke="#111" stroke-width="1"/><path d="M2,18l5,-10l2,4l1.500,-2.500l7.500,8.500z" fill="#8a8400"/><path d="M7,8l2,4l1.500,-2.500l7.500,8.500h-6z" fill="#b5ae00"/><g stroke="#8a8200" stroke-width="0.8" fill="none"><path d="M8.500,3.500l4,2.500 M7.800,5l4,2.500 M9.500,2.500l3.500,2.200"/></g><path d="M12.800,8.300h2.600l-0.900,-2.300z" fill="#4a4500"/></svg></div>
<div class="c" style="left:244px;top:753px;width:31px;height:24px;line-height:26px;background:#e4e3e2;color:#111;"></div>
<div class="c" style="left:276px;top:753px;width:32px;height:24px;line-height:26px;background:#e4e3e2;color:#111;"></div>
<div class="c" style="left:309px;top:753px;width:31px;height:24px;line-height:26px;background:#e4e3e2;color:#111;"></div>
<div class="c" style="left:341px;top:753px;width:31px;height:24px;line-height:26px;background:#e4e3e2;color:#111;"></div>
<div class="c" style="left:373px;top:753px;width:32px;height:24px;line-height:26px;background:#e4e3e2;color:#111;"></div>
<div class="c" style="left:406px;top:753px;width:31px;height:24px;line-height:26px;background:#e4e3e2;color:#111;"></div>
<div class="c" style="left:438px;top:753px;width:31px;height:24px;line-height:26px;background:#e4e3e2;color:#111;"></div>
<div class="c" style="left:470px;top:753px;width:32px;height:24px;line-height:26px;background:#e4e3e2;color:#111;"></div>
<div class="c" style="left:503px;top:753px;width:31px;height:24px;line-height:26px;background:#e4e3e2;color:#111;"></div>
<div class="c" style="left:535px;top:753px;width:31px;height:24px;line-height:26px;background:#d7191c;color:#fff;">3</div>
<div class="c" style="left:567px;top:753px;width:31px;height:24px;line-height:26px;background:#d7191c;color:#fff;">3</div>
<div class="c" style="left:599px;top:753px;width:32px;height:24px;line-height:26px;background:#d7191c;color:#fff;">3</div>
<div class="c" style="left:632px;top:753px;width:31px;height:24px;line-height:26px;background:#d7191c;color:#fff;">3</div>
<div class="c" style="left:664px;top:753px;width:31px;height:24px;line-height:26px;background:#d7191c;color:#fff;">3</div>
<div class="c" style="left:696px;top:753px;width:32px;height:24px;line-height:26px;background:#d7191c;color:#fff;">3</div>
<div class="c" style="left:729px;top:753px;width:31px;height:24px;line-height:26px;background:#d7191c;color:#fff;">3</div>
<div class="c" style="left:761px;top:753px;width:31px;height:24px;line-height:26px;background:#d7191c;color:#fff;">3</div>
<div class="c" style="left:793px;top:753px;width:31px;height:24px;line-height:26px;background:#d7191c;color:#fff;">3</div>
<div class="c" style="left:825px;top:753px;width:32px;height:24px;line-height:26px;background:#d7191c;color:#fff;">3</div>
<div class="c" style="left:858px;top:753px;width:31px;height:24px;line-height:26px;background:#d7191c;color:#fff;">3</div>
<div class="c" style="left:890px;top:753px;width:31px;height:24px;line-height:26px;background:#d7191c;color:#fff;">3</div>
<div class="c" style="left:922px;top:753px;width:32px;height:24px;line-height:26px;background:#d7191c;color:#fff;">3</div>
<div class="c" style="left:955px;top:753px;width:31px;height:24px;line-height:26px;background:#d7191c;color:#fff;">3</div>
<div class="c" style="left:987px;top:753px;width:31px;height:24px;line-height:26px;background:#d7191c;color:#fff;">3</div>
<div class="c" style="left:2px;top:778px;width:43px;height:23px;line-height:25px;background:#fff;color:#2458a8;"><svg class="abs" style="left:15px;top:3px" width="13" height="13" viewBox="0 0 13 13"><path d="M0,5h5v-5h3v5h5v3h-5v5h-3v-5h-5z" fill="#2458a8"/></svg></div>
<div class="c" style="left:46px;top:778px;width:143px;height:23px;line-height:25px;background:#fff;text-align:left;padding-left:6px;box-sizing:border-box;">Žilinský kraj</div>
<div class="c" style="left:190px;top:778px;width:53px;height:23px;line-height:25px;background:#fff;"><svg class="abs" style="left:7px;top:1px" width="20" height="20" viewBox="0 0 20 20"><rect x="0.500" y="0.500" width="19" height="19" fill="#ee1c1c" stroke="#111" stroke-width="1"/><path d="M10.9,3.999999999999999q-2.600,2.800 -2.300,4.600a1.450,1.450 0 0 0 2.900,-0.200q0,-2 -0.600,-4.400z" fill="#1a1200"/><path d="M5.800000000000001,9.600000000000001q-2.600,2.800 -2.300,4.600a1.450,1.450 0 0 0 2.900,-0.200q0,-2 -0.600,-4.400z" fill="#1a1200"/><path d="M14.1,9.7q-2.600,2.800 -2.300,4.600a1.450,1.450 0 0 0 2.900,-0.200q0,-2 -0.600,-4.400z" fill="#1a1200"/></svg><svg class="abs" style="left:29px;top:1px" width="20" height="20" viewBox="0 0 20 20"><rect x="0.500" y="0.500" width="19" height="19" fill="#ffed00" stroke="#111" stroke-width="1"/><path d="M2,18l5,-10l2,4l1.500,-2.500l7.500,8.500z" fill="#8a8400"/><path d="M7,8l2,4l1.500,-2.500l7.500,8.500h-6z" fill="#b5ae00"/><g stroke="#8a8200" stroke-width="0.8" fill="none"><path d="M8.500,3.500l4,2.500 M7.800,5l4,2.500 M9.500,2.500l3.500,2.200"/></g><path d="M12.800,8.300h2.600l-0.900,-2.300z" fill="#4a4500"/></svg></div>
<div class="c" style="left:244px;top:778px;width:31px;height:23px;line-height:25px;background:#e4e3e2;color:#111;"></div>
<div class="c" style="left:276px;top:778px;width:32px;height:23px;line-height:25px;background:#e4e3e2;color:#111;"></div>
<div class="c" style="left:309px;top:778px;width:31px;height:23px;line-height:25px;background:#e4e3e2;color:#111;"></div>
<div class="c" style="left:341px;top:778px;width:31px;height:23px;line-height:25px;background:#e4e3e2;color:#111;"></div>
<div class="c" style="left:373px;top:778px;width:32px;height:23px;line-height:25px;background:#e4e3e2;color:#111;"></div>
<div class="c" style="left:406px;top:778px;width:31px;height:23px;line-height:25px;background:#e4e3e2;color:#111;"></div>
<div class="c" style="left:438px;top:778px;width:31px;height:23px;line-height:25px;background:#e4e3e2;color:#111;"></div>
<div class="c" style="left:470px;top:778px;width:32px;height:23px;line-height:25px;background:#e4e3e2;color:#111;"></div>
<div class="c" style="left:503px;top:778px;width:31px;height:23px;line-height:25px;background:#e4e3e2;color:#111;"></div>
<div class="c" style="left:535px;top:778px;width:31px;height:23px;line-height:25px;background:#d7191c;color:#fff;">3</div>
<div class="c" style="left:567px;top:778px;width:31px;height:23px;line-height:25px;background:#d7191c;color:#fff;">3</div>
<div class="c" style="left:599px;top:778px;width:32px;height:23px;line-height:25px;background:#d7191c;color:#fff;">3</div>
<div class="c" style="left:632px;top:778px;width:31px;height:23px;line-height:25px;background:#d7191c;color:#fff;">3</div>
<div class="c" style="left:664px;top:778px;width:31px;height:23px;line-height:25px;background:#d7191c;color:#fff;">3</div>
<div class="c" style="left:696px;top:778px;width:32px;height:23px;line-height:25px;background:#d7191c;color:#fff;">3</div>
<div class="c" style="left:729px;top:778px;width:31px;height:23px;line-height:25px;background:#d7191c;color:#fff;">3</div>
<div class="c" style="left:761px;top:778px;width:31px;height:23px;line-height:25px;background:#d7191c;color:#fff;">3</div>
<div class="c" style="left:793px;top:778px;width:31px;height:23px;line-height:25px;background:#d7191c;color:#fff;">3</div>
<div class="c" style="left:825px;top:778px;width:32px;height:23px;line-height:25px;background:#d7191c;color:#fff;">3</div>
<div class="c" style="left:858px;top:778px;width:31px;height:23px;line-height:25px;background:#d7191c;color:#fff;">3</div>
<div class="c" style="left:890px;top:778px;width:31px;height:23px;line-height:25px;background:#d7191c;color:#fff;">3</div>
<div class="c" style="left:922px;top:778px;width:32px;height:23px;line-height:25px;background:#d7191c;color:#fff;">3</div>
<div class="c" style="left:955px;top:778px;width:31px;height:23px;line-height:25px;background:#d7191c;color:#fff;">3</div>
<div class="c" style="left:987px;top:778px;width:31px;height:23px;line-height:25px;background:#d7191c;color:#fff;">3</div>
</body></html>
